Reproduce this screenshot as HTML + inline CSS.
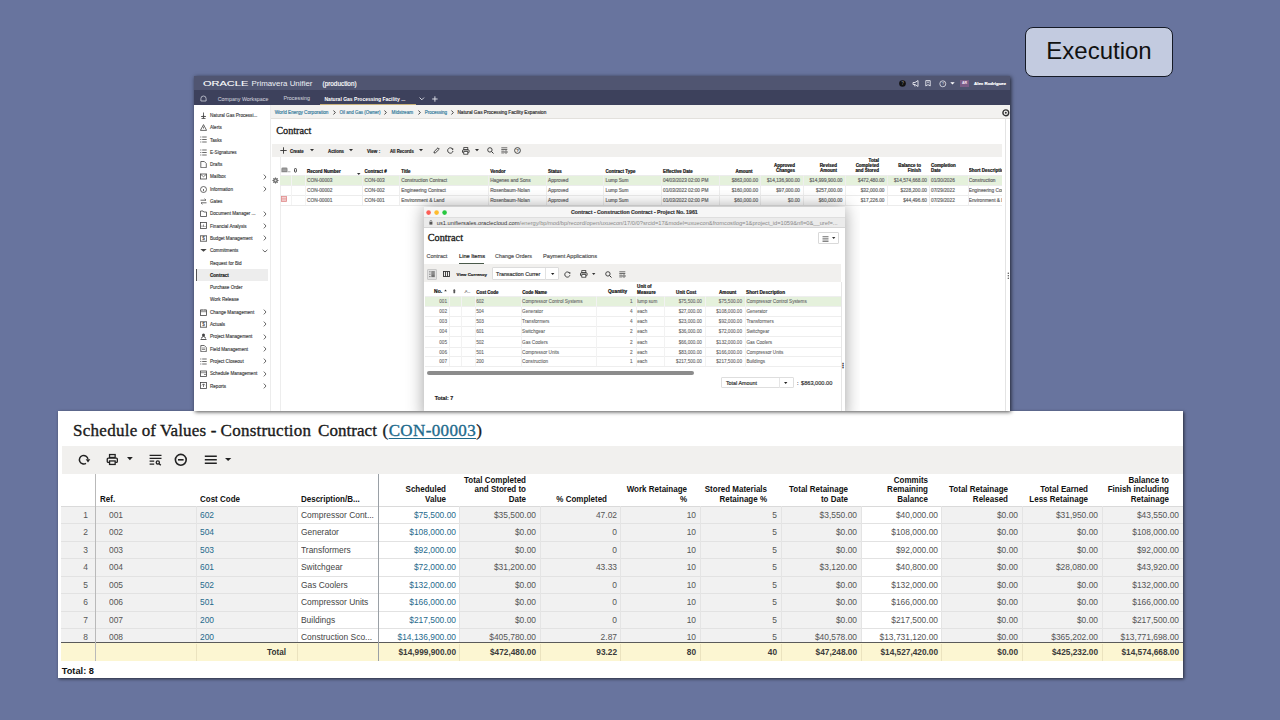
<!DOCTYPE html>
<html><head><meta charset="utf-8"><style>*{box-sizing:border-box;margin:0;padding:0}
html,body{width:1280px;height:720px;overflow:hidden}
body{position:relative;background:#68749e;font-family:'Liberation Sans',sans-serif;color:#333}
.t{position:absolute;white-space:nowrap;line-height:1;transform-origin:0 50%}
.r{position:absolute}
.layer{position:absolute;left:0;top:0;width:1280px;height:720px}
#exec{position:absolute;left:1025px;top:27px;width:148px;height:50px;border:1.5px solid #151a26;border-radius:8px;background:#c3cbe0;font-size:24px;color:#111;text-align:center;line-height:46px}
</style></head><body>
<div id="exec">Execution</div>
<div class="r" style="left:58.00px;top:411.00px;width:1125.00px;height:267.00px;background:#fff;box-shadow:1px 1px 3px rgba(0,0,0,.65);"></div>
<div class="layer" style="clip-path:inset(411px 97px 42px 58px)">
<div class="r" style="left:58.00px;top:411.00px;width:1125.00px;height:267.00px;background:#fff;"></div>
<div class="t" style="left:73.10px;top:422.00px;font-size:17px;color:#1a1a1a;font-family:'Liberation Serif',serif;letter-spacing:0.26px;-webkit-text-stroke:0.35px #1a1a1a">Schedule</div>
<div class="t" style="left:141.70px;top:422.00px;font-size:17px;color:#1a1a1a;font-family:'Liberation Serif',serif;letter-spacing:0px;-webkit-text-stroke:0.35px #1a1a1a">of</div>
<div class="t" style="left:159.90px;top:422.00px;font-size:17px;color:#1a1a1a;font-family:'Liberation Serif',serif;letter-spacing:0.18px;-webkit-text-stroke:0.35px #1a1a1a">Values</div>
<div class="t" style="left:210.80px;top:422.00px;font-size:17px;color:#1a1a1a;font-family:'Liberation Serif',serif;letter-spacing:0px;-webkit-text-stroke:0.35px #1a1a1a">-</div>
<div class="t" style="left:220.60px;top:422.00px;font-size:17px;color:#1a1a1a;font-family:'Liberation Serif',serif;letter-spacing:0.24px;-webkit-text-stroke:0.35px #1a1a1a">Construction</div>
<div class="t" style="left:318.10px;top:422.00px;font-size:17px;color:#1a1a1a;font-family:'Liberation Serif',serif;letter-spacing:0.04px;-webkit-text-stroke:0.35px #1a1a1a">Contract</div>
<div class="t" style="left:382.6px;top:422.00px;font-size:17px;color:#1a1a1a;font-family:'Liberation Serif',serif;letter-spacing:0.38px;-webkit-text-stroke:0.35px #1a1a1a">(<span style="color:#1d6a8c;-webkit-text-stroke:0.35px #1d6a8c;text-decoration:underline;text-decoration-thickness:1px;text-underline-offset:2px">CON-00003</span>)</div>
<div class="r" style="left:61.50px;top:446.00px;width:1121.50px;height:27.50px;background:#f1f0ee;"></div>
<svg class="r" style="left:77.00px;top:453.00px;" width="14" height="14" viewBox="0 0 14 14"><path d="M8.98 10.35A4.3 4.3 0 1 1 10.93 5.95" fill="none" stroke="#222" stroke-width="1.5"/><path d="M8.7 6.3h4.6L11 9.4z" fill="#222"/></svg>
<svg class="r" style="left:105.00px;top:453.00px;" width="15" height="14" viewBox="0 0 15 14"><rect x="4.55" y="1.55" width="5.6" height="2.9" fill="none" stroke="#222" stroke-width="1.3"/><rect x="2.25" y="5.05" width="10.1" height="4.4" rx="1" fill="none" stroke="#222" stroke-width="1.3"/><rect x="4.55" y="7.95" width="5.6" height="3.5" fill="#f1f0ee" stroke="#222" stroke-width="1.3"/></svg>
<svg class="r" style="left:127.00px;top:457.40px;" width="6" height="4" viewBox="0 0 6 4"><path d="M0 0h5.8L2.9 3.2z" fill="#222"/></svg>
<svg class="r" style="left:148.50px;top:453.50px;" width="14" height="12" viewBox="0 0 14 12"><path d="M0.6 1.3h11.9M0.6 4.4h11.9M0.6 7.15h4.6M0.6 10.1h4.6" stroke="#222" stroke-width="1.2"/><circle cx="8.8" cy="8.4" r="1.6" fill="none" stroke="#222" stroke-width="1.3"/><path d="M9.9 9.6l1.9 1.7" stroke="#222" stroke-width="1.4"/></svg>
<svg class="r" style="left:174.00px;top:452.70px;" width="14" height="14" viewBox="0 0 14 14"><circle cx="6.8" cy="6.8" r="5.4" fill="none" stroke="#222" stroke-width="1.6"/><path d="M4 6.8h5.6" stroke="#222" stroke-width="1.6"/></svg>
<svg class="r" style="left:204.00px;top:454.50px;" width="14" height="10" viewBox="0 0 14 10"><path d="M0.8 1.2h12M0.8 4.7h12M0.8 8.3h12" stroke="#222" stroke-width="1.6"/></svg>
<svg class="r" style="left:225.20px;top:457.70px;" width="7" height="4" viewBox="0 0 7 4"><path d="M0 0h6.3L3.15 3z" fill="#222"/></svg>
<div class="r" style="left:61.10px;top:506.00px;width:34.40px;height:136.50px;background:#f1f1f1;"></div>
<div class="r" style="left:95.50px;top:506.00px;width:100.90px;height:136.50px;background:#f1f1f1;"></div>
<div class="r" style="left:196.40px;top:506.00px;width:100.60px;height:136.50px;background:#f1f1f1;"></div>
<div class="r" style="left:297.00px;top:506.00px;width:81.30px;height:136.50px;background:#ffffff;"></div>
<div class="r" style="left:378.30px;top:506.00px;width:81.10px;height:136.50px;background:#ffffff;"></div>
<div class="r" style="left:459.40px;top:506.00px;width:80.30px;height:136.50px;background:#f1f1f1;"></div>
<div class="r" style="left:539.70px;top:506.00px;width:80.60px;height:136.50px;background:#f1f1f1;"></div>
<div class="r" style="left:620.30px;top:506.00px;width:79.70px;height:136.50px;background:#f1f1f1;"></div>
<div class="r" style="left:700.00px;top:506.00px;width:80.60px;height:136.50px;background:#f1f1f1;"></div>
<div class="r" style="left:780.60px;top:506.00px;width:80.40px;height:136.50px;background:#f1f1f1;"></div>
<div class="r" style="left:861.00px;top:506.00px;width:80.25px;height:136.50px;background:#ffffff;"></div>
<div class="r" style="left:941.25px;top:506.00px;width:80.65px;height:136.50px;background:#f1f1f1;"></div>
<div class="r" style="left:1021.90px;top:506.00px;width:79.70px;height:136.50px;background:#f1f1f1;"></div>
<div class="r" style="left:1101.60px;top:506.00px;width:81.20px;height:136.50px;background:#f1f1f1;"></div>
<div class="r" style="left:61.10px;top:506.00px;width:1121.70px;height:1.00px;background:#e2e2e2;"></div>
<div class="r" style="left:61.10px;top:523.00px;width:1121.70px;height:1.00px;background:#e2e2e2;"></div>
<div class="r" style="left:61.10px;top:541.00px;width:1121.70px;height:1.00px;background:#e2e2e2;"></div>
<div class="r" style="left:61.10px;top:558.00px;width:1121.70px;height:1.00px;background:#e2e2e2;"></div>
<div class="r" style="left:61.10px;top:576.00px;width:1121.70px;height:1.00px;background:#e2e2e2;"></div>
<div class="r" style="left:61.10px;top:593.00px;width:1121.70px;height:1.00px;background:#e2e2e2;"></div>
<div class="r" style="left:61.10px;top:611.00px;width:1121.70px;height:1.00px;background:#e2e2e2;"></div>
<div class="r" style="left:61.10px;top:628.00px;width:1121.70px;height:1.00px;background:#e2e2e2;"></div>
<div class="r" style="left:61.10px;top:505.70px;width:1121.70px;height:1.00px;background:#dadada;"></div>
<div class="r" style="left:196.40px;top:506.20px;width:1.00px;height:154.40px;background:#e4e4e4;"></div>
<div class="r" style="left:297.00px;top:506.20px;width:1.00px;height:154.40px;background:#e4e4e4;"></div>
<div class="r" style="left:459.40px;top:506.20px;width:1.00px;height:154.40px;background:#e4e4e4;"></div>
<div class="r" style="left:539.70px;top:506.20px;width:1.00px;height:154.40px;background:#e4e4e4;"></div>
<div class="r" style="left:620.30px;top:506.20px;width:1.00px;height:154.40px;background:#e4e4e4;"></div>
<div class="r" style="left:700.00px;top:506.20px;width:1.00px;height:154.40px;background:#e4e4e4;"></div>
<div class="r" style="left:780.60px;top:506.20px;width:1.00px;height:154.40px;background:#e4e4e4;"></div>
<div class="r" style="left:861.00px;top:506.20px;width:1.00px;height:154.40px;background:#e4e4e4;"></div>
<div class="r" style="left:941.25px;top:506.20px;width:1.00px;height:154.40px;background:#e4e4e4;"></div>
<div class="r" style="left:1021.90px;top:506.20px;width:1.00px;height:154.40px;background:#e4e4e4;"></div>
<div class="r" style="left:1101.60px;top:506.20px;width:1.00px;height:154.40px;background:#e4e4e4;"></div>
<div class="r" style="left:61.10px;top:642.50px;width:1121.70px;height:18.10px;background:#fcf6d2;"></div>
<div class="r" style="left:61.10px;top:642.00px;width:1121.70px;height:1.30px;background:#5a5a5a;"></div>
<div class="r" style="left:196.40px;top:643.50px;width:1.00px;height:17.10px;background:#ebe3bf;"></div>
<div class="r" style="left:297.00px;top:643.50px;width:1.00px;height:17.10px;background:#ebe3bf;"></div>
<div class="r" style="left:459.40px;top:643.50px;width:1.00px;height:17.10px;background:#ebe3bf;"></div>
<div class="r" style="left:539.70px;top:643.50px;width:1.00px;height:17.10px;background:#ebe3bf;"></div>
<div class="r" style="left:620.30px;top:643.50px;width:1.00px;height:17.10px;background:#ebe3bf;"></div>
<div class="r" style="left:700.00px;top:643.50px;width:1.00px;height:17.10px;background:#ebe3bf;"></div>
<div class="r" style="left:780.60px;top:643.50px;width:1.00px;height:17.10px;background:#ebe3bf;"></div>
<div class="r" style="left:861.00px;top:643.50px;width:1.00px;height:17.10px;background:#ebe3bf;"></div>
<div class="r" style="left:941.25px;top:643.50px;width:1.00px;height:17.10px;background:#ebe3bf;"></div>
<div class="r" style="left:1021.90px;top:643.50px;width:1.00px;height:17.10px;background:#ebe3bf;"></div>
<div class="r" style="left:1101.60px;top:643.50px;width:1.00px;height:17.10px;background:#ebe3bf;"></div>
<div class="r" style="left:95.20px;top:473.50px;width:1.00px;height:187.10px;background:#b9b9b9;"></div>
<div class="r" style="left:378.00px;top:473.50px;width:1.00px;height:187.10px;background:#9aa0a6;"></div>
<div class="t" style="left:99.70px;top:494.64px;font-size:9.3px;color:#111;font-weight:700;transform: scaleX(0.86);transform-origin:0 50%;">Ref.</div>
<div class="t" style="left:199.80px;top:494.64px;font-size:9.3px;color:#111;font-weight:700;transform: scaleX(0.86);transform-origin:0 50%;">Cost Code</div>
<div class="t" style="left:300.60px;top:494.64px;font-size:9.3px;color:#111;font-weight:700;transform: scaleX(0.86);transform-origin:0 50%;">Description/B...</div>
<div class="t" style="left:445.90px;top:485.24px;font-size:9.3px;color:#111;font-weight:700;transform:translateX(-100%) scaleX(0.86);transform-origin:100% 50%;">Scheduled</div>
<div class="t" style="left:445.90px;top:494.64px;font-size:9.3px;color:#111;font-weight:700;transform:translateX(-100%) scaleX(0.86);transform-origin:100% 50%;">Value</div>
<div class="t" style="left:526.20px;top:475.84px;font-size:9.3px;color:#111;font-weight:700;transform:translateX(-100%) scaleX(0.86);transform-origin:100% 50%;">Total Completed</div>
<div class="t" style="left:526.20px;top:485.24px;font-size:9.3px;color:#111;font-weight:700;transform:translateX(-100%) scaleX(0.86);transform-origin:100% 50%;">and Stored to</div>
<div class="t" style="left:526.20px;top:494.64px;font-size:9.3px;color:#111;font-weight:700;transform:translateX(-100%) scaleX(0.86);transform-origin:100% 50%;">Date</div>
<div class="t" style="left:606.80px;top:494.64px;font-size:9.3px;color:#111;font-weight:700;transform:translateX(-100%) scaleX(0.86);transform-origin:100% 50%;">% Completed</div>
<div class="t" style="left:686.50px;top:485.24px;font-size:9.3px;color:#111;font-weight:700;transform:translateX(-100%) scaleX(0.86);transform-origin:100% 50%;">Work Retainage</div>
<div class="t" style="left:686.50px;top:494.64px;font-size:9.3px;color:#111;font-weight:700;transform:translateX(-100%) scaleX(0.86);transform-origin:100% 50%;">%</div>
<div class="t" style="left:767.10px;top:485.24px;font-size:9.3px;color:#111;font-weight:700;transform:translateX(-100%) scaleX(0.86);transform-origin:100% 50%;">Stored Materials</div>
<div class="t" style="left:767.10px;top:494.64px;font-size:9.3px;color:#111;font-weight:700;transform:translateX(-100%) scaleX(0.86);transform-origin:100% 50%;">Retainage %</div>
<div class="t" style="left:847.50px;top:485.24px;font-size:9.3px;color:#111;font-weight:700;transform:translateX(-100%) scaleX(0.86);transform-origin:100% 50%;">Total Retainage</div>
<div class="t" style="left:847.50px;top:494.64px;font-size:9.3px;color:#111;font-weight:700;transform:translateX(-100%) scaleX(0.86);transform-origin:100% 50%;">to Date</div>
<div class="t" style="left:927.75px;top:475.84px;font-size:9.3px;color:#111;font-weight:700;transform:translateX(-100%) scaleX(0.86);transform-origin:100% 50%;">Commits</div>
<div class="t" style="left:927.75px;top:485.24px;font-size:9.3px;color:#111;font-weight:700;transform:translateX(-100%) scaleX(0.86);transform-origin:100% 50%;">Remaining</div>
<div class="t" style="left:927.75px;top:494.64px;font-size:9.3px;color:#111;font-weight:700;transform:translateX(-100%) scaleX(0.86);transform-origin:100% 50%;">Balance</div>
<div class="t" style="left:1008.40px;top:485.24px;font-size:9.3px;color:#111;font-weight:700;transform:translateX(-100%) scaleX(0.86);transform-origin:100% 50%;">Total Retainage</div>
<div class="t" style="left:1008.40px;top:494.64px;font-size:9.3px;color:#111;font-weight:700;transform:translateX(-100%) scaleX(0.86);transform-origin:100% 50%;">Released</div>
<div class="t" style="left:1088.10px;top:485.24px;font-size:9.3px;color:#111;font-weight:700;transform:translateX(-100%) scaleX(0.86);transform-origin:100% 50%;">Total Earned</div>
<div class="t" style="left:1088.10px;top:494.64px;font-size:9.3px;color:#111;font-weight:700;transform:translateX(-100%) scaleX(0.86);transform-origin:100% 50%;">Less Retainage</div>
<div class="t" style="left:1169.30px;top:475.84px;font-size:9.3px;color:#111;font-weight:700;transform:translateX(-100%) scaleX(0.86);transform-origin:100% 50%;">Balance to</div>
<div class="t" style="left:1169.30px;top:485.24px;font-size:9.3px;color:#111;font-weight:700;transform:translateX(-100%) scaleX(0.86);transform-origin:100% 50%;">Finish including</div>
<div class="t" style="left:1169.30px;top:494.64px;font-size:9.3px;color:#111;font-weight:700;transform:translateX(-100%) scaleX(0.86);transform-origin:100% 50%;">Retainage</div>
<div class="t" style="left:88.00px;top:511.34px;font-size:9.3px;color:#555;transform:translateX(-100%) scaleX(0.905);transform-origin:100% 50%;">1</div>
<div class="t" style="left:109.25px;top:511.34px;font-size:9.3px;color:#555;transform: scaleX(0.905);transform-origin:0 50%;">001</div>
<div class="t" style="left:199.80px;top:511.34px;font-size:9.3px;color:#1f6a8c;transform: scaleX(0.905);transform-origin:0 50%;">602</div>
<div class="t" style="left:300.60px;top:511.34px;font-size:9.3px;color:#444;transform: scaleX(0.905);transform-origin:0 50%;">Compressor Cont...</div>
<div class="t" style="left:455.80px;top:511.34px;font-size:9.3px;color:#1f6a8c;transform:translateX(-100%) scaleX(0.905);transform-origin:100% 50%;">$75,500.00</div>
<div class="t" style="left:536.10px;top:511.34px;font-size:9.3px;color:#555;transform:translateX(-100%) scaleX(0.905);transform-origin:100% 50%;">$35,500.00</div>
<div class="t" style="left:616.70px;top:511.34px;font-size:9.3px;color:#555;transform:translateX(-100%) scaleX(0.905);transform-origin:100% 50%;">47.02</div>
<div class="t" style="left:696.40px;top:511.34px;font-size:9.3px;color:#555;transform:translateX(-100%) scaleX(0.905);transform-origin:100% 50%;">10</div>
<div class="t" style="left:777.00px;top:511.34px;font-size:9.3px;color:#555;transform:translateX(-100%) scaleX(0.905);transform-origin:100% 50%;">5</div>
<div class="t" style="left:857.40px;top:511.34px;font-size:9.3px;color:#555;transform:translateX(-100%) scaleX(0.905);transform-origin:100% 50%;">$3,550.00</div>
<div class="t" style="left:937.65px;top:511.34px;font-size:9.3px;color:#555;transform:translateX(-100%) scaleX(0.905);transform-origin:100% 50%;">$40,000.00</div>
<div class="t" style="left:1018.30px;top:511.34px;font-size:9.3px;color:#555;transform:translateX(-100%) scaleX(0.905);transform-origin:100% 50%;">$0.00</div>
<div class="t" style="left:1098.00px;top:511.34px;font-size:9.3px;color:#555;transform:translateX(-100%) scaleX(0.905);transform-origin:100% 50%;">$31,950.00</div>
<div class="t" style="left:1179.20px;top:511.34px;font-size:9.3px;color:#555;transform:translateX(-100%) scaleX(0.905);transform-origin:100% 50%;">$43,550.00</div>
<div class="t" style="left:88.00px;top:528.34px;font-size:9.3px;color:#555;transform:translateX(-100%) scaleX(0.905);transform-origin:100% 50%;">2</div>
<div class="t" style="left:109.25px;top:528.34px;font-size:9.3px;color:#555;transform: scaleX(0.905);transform-origin:0 50%;">002</div>
<div class="t" style="left:199.80px;top:528.34px;font-size:9.3px;color:#1f6a8c;transform: scaleX(0.905);transform-origin:0 50%;">504</div>
<div class="t" style="left:300.60px;top:528.34px;font-size:9.3px;color:#444;transform: scaleX(0.905);transform-origin:0 50%;">Generator</div>
<div class="t" style="left:455.80px;top:528.34px;font-size:9.3px;color:#1f6a8c;transform:translateX(-100%) scaleX(0.905);transform-origin:100% 50%;">$108,000.00</div>
<div class="t" style="left:536.10px;top:528.34px;font-size:9.3px;color:#555;transform:translateX(-100%) scaleX(0.905);transform-origin:100% 50%;">$0.00</div>
<div class="t" style="left:616.70px;top:528.34px;font-size:9.3px;color:#555;transform:translateX(-100%) scaleX(0.905);transform-origin:100% 50%;">0</div>
<div class="t" style="left:696.40px;top:528.34px;font-size:9.3px;color:#555;transform:translateX(-100%) scaleX(0.905);transform-origin:100% 50%;">10</div>
<div class="t" style="left:777.00px;top:528.34px;font-size:9.3px;color:#555;transform:translateX(-100%) scaleX(0.905);transform-origin:100% 50%;">5</div>
<div class="t" style="left:857.40px;top:528.34px;font-size:9.3px;color:#555;transform:translateX(-100%) scaleX(0.905);transform-origin:100% 50%;">$0.00</div>
<div class="t" style="left:937.65px;top:528.34px;font-size:9.3px;color:#555;transform:translateX(-100%) scaleX(0.905);transform-origin:100% 50%;">$108,000.00</div>
<div class="t" style="left:1018.30px;top:528.34px;font-size:9.3px;color:#555;transform:translateX(-100%) scaleX(0.905);transform-origin:100% 50%;">$0.00</div>
<div class="t" style="left:1098.00px;top:528.34px;font-size:9.3px;color:#555;transform:translateX(-100%) scaleX(0.905);transform-origin:100% 50%;">$0.00</div>
<div class="t" style="left:1179.20px;top:528.34px;font-size:9.3px;color:#555;transform:translateX(-100%) scaleX(0.905);transform-origin:100% 50%;">$108,000.00</div>
<div class="t" style="left:88.00px;top:546.34px;font-size:9.3px;color:#555;transform:translateX(-100%) scaleX(0.905);transform-origin:100% 50%;">3</div>
<div class="t" style="left:109.25px;top:546.34px;font-size:9.3px;color:#555;transform: scaleX(0.905);transform-origin:0 50%;">003</div>
<div class="t" style="left:199.80px;top:546.34px;font-size:9.3px;color:#1f6a8c;transform: scaleX(0.905);transform-origin:0 50%;">503</div>
<div class="t" style="left:300.60px;top:546.34px;font-size:9.3px;color:#444;transform: scaleX(0.905);transform-origin:0 50%;">Transformers</div>
<div class="t" style="left:455.80px;top:546.34px;font-size:9.3px;color:#1f6a8c;transform:translateX(-100%) scaleX(0.905);transform-origin:100% 50%;">$92,000.00</div>
<div class="t" style="left:536.10px;top:546.34px;font-size:9.3px;color:#555;transform:translateX(-100%) scaleX(0.905);transform-origin:100% 50%;">$0.00</div>
<div class="t" style="left:616.70px;top:546.34px;font-size:9.3px;color:#555;transform:translateX(-100%) scaleX(0.905);transform-origin:100% 50%;">0</div>
<div class="t" style="left:696.40px;top:546.34px;font-size:9.3px;color:#555;transform:translateX(-100%) scaleX(0.905);transform-origin:100% 50%;">10</div>
<div class="t" style="left:777.00px;top:546.34px;font-size:9.3px;color:#555;transform:translateX(-100%) scaleX(0.905);transform-origin:100% 50%;">5</div>
<div class="t" style="left:857.40px;top:546.34px;font-size:9.3px;color:#555;transform:translateX(-100%) scaleX(0.905);transform-origin:100% 50%;">$0.00</div>
<div class="t" style="left:937.65px;top:546.34px;font-size:9.3px;color:#555;transform:translateX(-100%) scaleX(0.905);transform-origin:100% 50%;">$92,000.00</div>
<div class="t" style="left:1018.30px;top:546.34px;font-size:9.3px;color:#555;transform:translateX(-100%) scaleX(0.905);transform-origin:100% 50%;">$0.00</div>
<div class="t" style="left:1098.00px;top:546.34px;font-size:9.3px;color:#555;transform:translateX(-100%) scaleX(0.905);transform-origin:100% 50%;">$0.00</div>
<div class="t" style="left:1179.20px;top:546.34px;font-size:9.3px;color:#555;transform:translateX(-100%) scaleX(0.905);transform-origin:100% 50%;">$92,000.00</div>
<div class="t" style="left:88.00px;top:563.34px;font-size:9.3px;color:#555;transform:translateX(-100%) scaleX(0.905);transform-origin:100% 50%;">4</div>
<div class="t" style="left:109.25px;top:563.34px;font-size:9.3px;color:#555;transform: scaleX(0.905);transform-origin:0 50%;">004</div>
<div class="t" style="left:199.80px;top:563.34px;font-size:9.3px;color:#1f6a8c;transform: scaleX(0.905);transform-origin:0 50%;">601</div>
<div class="t" style="left:300.60px;top:563.34px;font-size:9.3px;color:#444;transform: scaleX(0.905);transform-origin:0 50%;">Switchgear</div>
<div class="t" style="left:455.80px;top:563.34px;font-size:9.3px;color:#1f6a8c;transform:translateX(-100%) scaleX(0.905);transform-origin:100% 50%;">$72,000.00</div>
<div class="t" style="left:536.10px;top:563.34px;font-size:9.3px;color:#555;transform:translateX(-100%) scaleX(0.905);transform-origin:100% 50%;">$31,200.00</div>
<div class="t" style="left:616.70px;top:563.34px;font-size:9.3px;color:#555;transform:translateX(-100%) scaleX(0.905);transform-origin:100% 50%;">43.33</div>
<div class="t" style="left:696.40px;top:563.34px;font-size:9.3px;color:#555;transform:translateX(-100%) scaleX(0.905);transform-origin:100% 50%;">10</div>
<div class="t" style="left:777.00px;top:563.34px;font-size:9.3px;color:#555;transform:translateX(-100%) scaleX(0.905);transform-origin:100% 50%;">5</div>
<div class="t" style="left:857.40px;top:563.34px;font-size:9.3px;color:#555;transform:translateX(-100%) scaleX(0.905);transform-origin:100% 50%;">$3,120.00</div>
<div class="t" style="left:937.65px;top:563.34px;font-size:9.3px;color:#555;transform:translateX(-100%) scaleX(0.905);transform-origin:100% 50%;">$40,800.00</div>
<div class="t" style="left:1018.30px;top:563.34px;font-size:9.3px;color:#555;transform:translateX(-100%) scaleX(0.905);transform-origin:100% 50%;">$0.00</div>
<div class="t" style="left:1098.00px;top:563.34px;font-size:9.3px;color:#555;transform:translateX(-100%) scaleX(0.905);transform-origin:100% 50%;">$28,080.00</div>
<div class="t" style="left:1179.20px;top:563.34px;font-size:9.3px;color:#555;transform:translateX(-100%) scaleX(0.905);transform-origin:100% 50%;">$43,920.00</div>
<div class="t" style="left:88.00px;top:581.34px;font-size:9.3px;color:#555;transform:translateX(-100%) scaleX(0.905);transform-origin:100% 50%;">5</div>
<div class="t" style="left:109.25px;top:581.34px;font-size:9.3px;color:#555;transform: scaleX(0.905);transform-origin:0 50%;">005</div>
<div class="t" style="left:199.80px;top:581.34px;font-size:9.3px;color:#1f6a8c;transform: scaleX(0.905);transform-origin:0 50%;">502</div>
<div class="t" style="left:300.60px;top:581.34px;font-size:9.3px;color:#444;transform: scaleX(0.905);transform-origin:0 50%;">Gas Coolers</div>
<div class="t" style="left:455.80px;top:581.34px;font-size:9.3px;color:#1f6a8c;transform:translateX(-100%) scaleX(0.905);transform-origin:100% 50%;">$132,000.00</div>
<div class="t" style="left:536.10px;top:581.34px;font-size:9.3px;color:#555;transform:translateX(-100%) scaleX(0.905);transform-origin:100% 50%;">$0.00</div>
<div class="t" style="left:616.70px;top:581.34px;font-size:9.3px;color:#555;transform:translateX(-100%) scaleX(0.905);transform-origin:100% 50%;">0</div>
<div class="t" style="left:696.40px;top:581.34px;font-size:9.3px;color:#555;transform:translateX(-100%) scaleX(0.905);transform-origin:100% 50%;">10</div>
<div class="t" style="left:777.00px;top:581.34px;font-size:9.3px;color:#555;transform:translateX(-100%) scaleX(0.905);transform-origin:100% 50%;">5</div>
<div class="t" style="left:857.40px;top:581.34px;font-size:9.3px;color:#555;transform:translateX(-100%) scaleX(0.905);transform-origin:100% 50%;">$0.00</div>
<div class="t" style="left:937.65px;top:581.34px;font-size:9.3px;color:#555;transform:translateX(-100%) scaleX(0.905);transform-origin:100% 50%;">$132,000.00</div>
<div class="t" style="left:1018.30px;top:581.34px;font-size:9.3px;color:#555;transform:translateX(-100%) scaleX(0.905);transform-origin:100% 50%;">$0.00</div>
<div class="t" style="left:1098.00px;top:581.34px;font-size:9.3px;color:#555;transform:translateX(-100%) scaleX(0.905);transform-origin:100% 50%;">$0.00</div>
<div class="t" style="left:1179.20px;top:581.34px;font-size:9.3px;color:#555;transform:translateX(-100%) scaleX(0.905);transform-origin:100% 50%;">$132,000.00</div>
<div class="t" style="left:88.00px;top:598.34px;font-size:9.3px;color:#555;transform:translateX(-100%) scaleX(0.905);transform-origin:100% 50%;">6</div>
<div class="t" style="left:109.25px;top:598.34px;font-size:9.3px;color:#555;transform: scaleX(0.905);transform-origin:0 50%;">006</div>
<div class="t" style="left:199.80px;top:598.34px;font-size:9.3px;color:#1f6a8c;transform: scaleX(0.905);transform-origin:0 50%;">501</div>
<div class="t" style="left:300.60px;top:598.34px;font-size:9.3px;color:#444;transform: scaleX(0.905);transform-origin:0 50%;">Compressor Units</div>
<div class="t" style="left:455.80px;top:598.34px;font-size:9.3px;color:#1f6a8c;transform:translateX(-100%) scaleX(0.905);transform-origin:100% 50%;">$166,000.00</div>
<div class="t" style="left:536.10px;top:598.34px;font-size:9.3px;color:#555;transform:translateX(-100%) scaleX(0.905);transform-origin:100% 50%;">$0.00</div>
<div class="t" style="left:616.70px;top:598.34px;font-size:9.3px;color:#555;transform:translateX(-100%) scaleX(0.905);transform-origin:100% 50%;">0</div>
<div class="t" style="left:696.40px;top:598.34px;font-size:9.3px;color:#555;transform:translateX(-100%) scaleX(0.905);transform-origin:100% 50%;">10</div>
<div class="t" style="left:777.00px;top:598.34px;font-size:9.3px;color:#555;transform:translateX(-100%) scaleX(0.905);transform-origin:100% 50%;">5</div>
<div class="t" style="left:857.40px;top:598.34px;font-size:9.3px;color:#555;transform:translateX(-100%) scaleX(0.905);transform-origin:100% 50%;">$0.00</div>
<div class="t" style="left:937.65px;top:598.34px;font-size:9.3px;color:#555;transform:translateX(-100%) scaleX(0.905);transform-origin:100% 50%;">$166,000.00</div>
<div class="t" style="left:1018.30px;top:598.34px;font-size:9.3px;color:#555;transform:translateX(-100%) scaleX(0.905);transform-origin:100% 50%;">$0.00</div>
<div class="t" style="left:1098.00px;top:598.34px;font-size:9.3px;color:#555;transform:translateX(-100%) scaleX(0.905);transform-origin:100% 50%;">$0.00</div>
<div class="t" style="left:1179.20px;top:598.34px;font-size:9.3px;color:#555;transform:translateX(-100%) scaleX(0.905);transform-origin:100% 50%;">$166,000.00</div>
<div class="t" style="left:88.00px;top:616.34px;font-size:9.3px;color:#555;transform:translateX(-100%) scaleX(0.905);transform-origin:100% 50%;">7</div>
<div class="t" style="left:109.25px;top:616.34px;font-size:9.3px;color:#555;transform: scaleX(0.905);transform-origin:0 50%;">007</div>
<div class="t" style="left:199.80px;top:616.34px;font-size:9.3px;color:#1f6a8c;transform: scaleX(0.905);transform-origin:0 50%;">200</div>
<div class="t" style="left:300.60px;top:616.34px;font-size:9.3px;color:#444;transform: scaleX(0.905);transform-origin:0 50%;">Buildings</div>
<div class="t" style="left:455.80px;top:616.34px;font-size:9.3px;color:#1f6a8c;transform:translateX(-100%) scaleX(0.905);transform-origin:100% 50%;">$217,500.00</div>
<div class="t" style="left:536.10px;top:616.34px;font-size:9.3px;color:#555;transform:translateX(-100%) scaleX(0.905);transform-origin:100% 50%;">$0.00</div>
<div class="t" style="left:616.70px;top:616.34px;font-size:9.3px;color:#555;transform:translateX(-100%) scaleX(0.905);transform-origin:100% 50%;">0</div>
<div class="t" style="left:696.40px;top:616.34px;font-size:9.3px;color:#555;transform:translateX(-100%) scaleX(0.905);transform-origin:100% 50%;">10</div>
<div class="t" style="left:777.00px;top:616.34px;font-size:9.3px;color:#555;transform:translateX(-100%) scaleX(0.905);transform-origin:100% 50%;">5</div>
<div class="t" style="left:857.40px;top:616.34px;font-size:9.3px;color:#555;transform:translateX(-100%) scaleX(0.905);transform-origin:100% 50%;">$0.00</div>
<div class="t" style="left:937.65px;top:616.34px;font-size:9.3px;color:#555;transform:translateX(-100%) scaleX(0.905);transform-origin:100% 50%;">$217,500.00</div>
<div class="t" style="left:1018.30px;top:616.34px;font-size:9.3px;color:#555;transform:translateX(-100%) scaleX(0.905);transform-origin:100% 50%;">$0.00</div>
<div class="t" style="left:1098.00px;top:616.34px;font-size:9.3px;color:#555;transform:translateX(-100%) scaleX(0.905);transform-origin:100% 50%;">$0.00</div>
<div class="t" style="left:1179.20px;top:616.34px;font-size:9.3px;color:#555;transform:translateX(-100%) scaleX(0.905);transform-origin:100% 50%;">$217,500.00</div>
<div class="t" style="left:88.00px;top:633.34px;font-size:9.3px;color:#555;transform:translateX(-100%) scaleX(0.905);transform-origin:100% 50%;">8</div>
<div class="t" style="left:109.25px;top:633.34px;font-size:9.3px;color:#555;transform: scaleX(0.905);transform-origin:0 50%;">008</div>
<div class="t" style="left:199.80px;top:633.34px;font-size:9.3px;color:#1f6a8c;transform: scaleX(0.905);transform-origin:0 50%;">200</div>
<div class="t" style="left:300.60px;top:633.34px;font-size:9.3px;color:#444;transform: scaleX(0.905);transform-origin:0 50%;">Construction Sco...</div>
<div class="t" style="left:455.80px;top:633.34px;font-size:9.3px;color:#1f6a8c;transform:translateX(-100%) scaleX(0.905);transform-origin:100% 50%;">$14,136,900.00</div>
<div class="t" style="left:536.10px;top:633.34px;font-size:9.3px;color:#555;transform:translateX(-100%) scaleX(0.905);transform-origin:100% 50%;">$405,780.00</div>
<div class="t" style="left:616.70px;top:633.34px;font-size:9.3px;color:#555;transform:translateX(-100%) scaleX(0.905);transform-origin:100% 50%;">2.87</div>
<div class="t" style="left:696.40px;top:633.34px;font-size:9.3px;color:#555;transform:translateX(-100%) scaleX(0.905);transform-origin:100% 50%;">10</div>
<div class="t" style="left:777.00px;top:633.34px;font-size:9.3px;color:#555;transform:translateX(-100%) scaleX(0.905);transform-origin:100% 50%;">5</div>
<div class="t" style="left:857.40px;top:633.34px;font-size:9.3px;color:#555;transform:translateX(-100%) scaleX(0.905);transform-origin:100% 50%;">$40,578.00</div>
<div class="t" style="left:937.65px;top:633.34px;font-size:9.3px;color:#555;transform:translateX(-100%) scaleX(0.905);transform-origin:100% 50%;">$13,731,120.00</div>
<div class="t" style="left:1018.30px;top:633.34px;font-size:9.3px;color:#555;transform:translateX(-100%) scaleX(0.905);transform-origin:100% 50%;">$0.00</div>
<div class="t" style="left:1098.00px;top:633.34px;font-size:9.3px;color:#555;transform:translateX(-100%) scaleX(0.905);transform-origin:100% 50%;">$365,202.00</div>
<div class="t" style="left:1179.20px;top:633.34px;font-size:9.3px;color:#555;transform:translateX(-100%) scaleX(0.905);transform-origin:100% 50%;">$13,771,698.00</div>
<div class="t" style="left:286.00px;top:647.94px;font-size:9.1px;color:#333;font-weight:700;transform:translateX(-100%) scaleX(0.9);transform-origin:100% 50%;">Total</div>
<div class="t" style="left:455.80px;top:647.89px;font-size:9.2px;color:#3a3a3a;font-weight:700;transform:translateX(-100%) scaleX(0.9);transform-origin:100% 50%;">$14,999,900.00</div>
<div class="t" style="left:536.10px;top:647.89px;font-size:9.2px;color:#3a3a3a;font-weight:700;transform:translateX(-100%) scaleX(0.9);transform-origin:100% 50%;">$472,480.00</div>
<div class="t" style="left:616.70px;top:647.89px;font-size:9.2px;color:#3a3a3a;font-weight:700;transform:translateX(-100%) scaleX(0.9);transform-origin:100% 50%;">93.22</div>
<div class="t" style="left:696.40px;top:647.89px;font-size:9.2px;color:#3a3a3a;font-weight:700;transform:translateX(-100%) scaleX(0.9);transform-origin:100% 50%;">80</div>
<div class="t" style="left:777.00px;top:647.89px;font-size:9.2px;color:#3a3a3a;font-weight:700;transform:translateX(-100%) scaleX(0.9);transform-origin:100% 50%;">40</div>
<div class="t" style="left:857.40px;top:647.89px;font-size:9.2px;color:#3a3a3a;font-weight:700;transform:translateX(-100%) scaleX(0.9);transform-origin:100% 50%;">$47,248.00</div>
<div class="t" style="left:937.65px;top:647.89px;font-size:9.2px;color:#3a3a3a;font-weight:700;transform:translateX(-100%) scaleX(0.9);transform-origin:100% 50%;">$14,527,420.00</div>
<div class="t" style="left:1018.30px;top:647.89px;font-size:9.2px;color:#3a3a3a;font-weight:700;transform:translateX(-100%) scaleX(0.9);transform-origin:100% 50%;">$0.00</div>
<div class="t" style="left:1098.00px;top:647.89px;font-size:9.2px;color:#3a3a3a;font-weight:700;transform:translateX(-100%) scaleX(0.9);transform-origin:100% 50%;">$425,232.00</div>
<div class="t" style="left:1179.20px;top:647.89px;font-size:9.2px;color:#3a3a3a;font-weight:700;transform:translateX(-100%) scaleX(0.9);transform-origin:100% 50%;">$14,574,668.00</div>
<div class="t" style="left:61.75px;top:666.67px;font-size:9.25px;color:#111;font-weight:700;">Total: 8</div>
</div>
<div class="r" style="left:194.00px;top:76.00px;width:816.00px;height:335.00px;background:#fff;box-shadow:1px 1px 4px rgba(0,0,0,.7);"></div>
<div class="layer" style="clip-path:inset(76px 270px 309px 194px)">
<div class="r" style="left:194.00px;top:76.00px;width:816.00px;height:335.00px;background:#fff;"></div>
<div class="r" style="left:194.00px;top:76.00px;width:816.00px;height:14.00px;background:#505571;"></div>
<div class="t" style="left:202.80px;top:80.28px;font-size:7.6px;color:#fff;transform: scaleX(1.45);-webkit-text-stroke:0.1px #fff;transform-origin:0 50%;transform-origin:0 50%;">ORACLE</div>
<div class="t" style="left:251.50px;top:80.13px;font-size:7.9px;color:#eef0f5;">Primavera Unifier</div>
<div class="t" style="left:322.50px;top:81.06px;font-size:6.4px;color:#fff;-webkit-text-stroke:0.15px #fff;">(production)</div>
<svg class="r" style="left:899.00px;top:80.00px;" width="7" height="7" viewBox="0 0 7 7"><circle cx="3.5" cy="3.5" r="3.3" fill="#111"/><text x="3.5" y="5.3" font-size="4.5" fill="#777" text-anchor="middle" font-family="Liberation Sans" font-weight="700">?</text></svg>
<svg class="r" style="left:912.00px;top:80.00px;" width="8" height="7" viewBox="0 0 8 7"><path d="M1 2.5h2l3-2v6l-3-2H1z" fill="none" stroke="#e6e8ef" stroke-width="0.9"/><path d="M2.5 4.5l.5 2" stroke="#e6e8ef" stroke-width="0.9"/></svg>
<svg class="r" style="left:924.50px;top:79.80px;" width="6" height="7" viewBox="0 0 6 7"><path d="M0.8 0.6h4.4v5.4L3 4.6 0.8 6z" fill="none" stroke="#e6e8ef" stroke-width="0.9"/><path d="M2 2.2h2" stroke="#e6e8ef" stroke-width="0.8"/></svg>
<svg class="r" style="left:939.00px;top:79.50px;" width="8" height="8" viewBox="0 0 8 8"><circle cx="3.8" cy="3.8" r="3" fill="none" stroke="#e6e8ef" stroke-width="0.8"/><text x="3.8" y="5.4" font-size="4.2" fill="#e6e8ef" text-anchor="middle" font-family="Liberation Sans">?</text></svg>
<svg class="r" style="left:950.00px;top:82.00px;" width="5" height="3" viewBox="0 0 5 3"><path d="M0.3 0.3h4.4L2.5 2.6z" fill="#fff"/></svg>
<div class="r" style="left:960.20px;top:79.70px;width:8.70px;height:7.70px;background:#7a5c86;"></div>
<div class="t" style="left:964.55px;top:82.44px;font-size:3.6px;color:#f6e6f4;font-weight:700;transform:translateX(-50%);">AR</div>
<div class="t" style="left:974.00px;top:81.84px;font-size:4.4px;color:#fff;font-weight:700;-webkit-text-stroke:0.18px #fff;">Alex Rodriguez</div>
<div class="r" style="left:194.00px;top:90.00px;width:816.00px;height:15.00px;background:#3d415c;"></div>
<svg class="r" style="left:199.50px;top:95.00px;" width="7" height="7" viewBox="0 0 7 7"><path d="M0.9 6V3.6A2.6 2.6 0 0 1 6.1 3.6V6z" fill="none" stroke="#cfd2dc" stroke-width="0.8"/></svg>
<div class="t" style="left:217.80px;top:96.50px;font-size:5.3px;color:#c9ccd8;-webkit-text-stroke:0.05px #c9ccd8;">Company Workspace</div>
<div class="t" style="left:283.50px;top:96.47px;font-size:5.36px;color:#c9ccd8;-webkit-text-stroke:0.05px #c9ccd8;">Processing</div>
<div class="t" style="left:324.50px;top:96.64px;font-size:5.03px;color:#ffffff;font-weight:700;">Natural Gas Processing Facility ...</div>
<div class="r" style="left:320.00px;top:104.00px;width:95.70px;height:1.00px;background:#c9b27a;"></div>
<svg class="r" style="left:419.00px;top:96.50px;" width="6" height="4" viewBox="0 0 6 4"><path d="M0.6 0.6L2.8 2.8 5 0.6" fill="none" stroke="#e6e8ef" stroke-width="0.9"/></svg>
<svg class="r" style="left:432.00px;top:95.50px;" width="6" height="6" viewBox="0 0 6 6"><path d="M2.9 0.3v5.4M0.2 3h5.4" fill="none" stroke="#e6e8ef" stroke-width="0.9"/></svg>
<div class="r" style="left:271.00px;top:105.00px;width:739.00px;height:13.50px;background:#f3f2f0;"></div>
<div class="r" style="left:271.00px;top:118.00px;width:739.00px;height:1.00px;background:#e3e1dd;"></div>
<div class="t" style="left:274.70px;top:111.31px;font-size:4.67px;color:#3b7fa0;-webkit-text-stroke:0.18px #3b7fa0;">World Energy Corporation</div>
<svg class="r" style="left:332.55px;top:109.80px;" width="3" height="5" viewBox="0 0 3 5"><path d="M0.5 0.5L2.3 2.5 0.5 4.5" fill="none" stroke="#333" stroke-width="0.9"/></svg>
<div class="t" style="left:339.50px;top:111.40px;font-size:4.48px;color:#3b7fa0;-webkit-text-stroke:0.18px #3b7fa0;">Oil and Gas (Owner)</div>
<svg class="r" style="left:384.40px;top:109.80px;" width="3" height="5" viewBox="0 0 3 5"><path d="M0.5 0.5L2.3 2.5 0.5 4.5" fill="none" stroke="#333" stroke-width="0.9"/></svg>
<div class="t" style="left:391.60px;top:111.35px;font-size:4.6px;color:#3b7fa0;-webkit-text-stroke:0.18px #3b7fa0;">Midstream</div>
<svg class="r" style="left:418.00px;top:109.80px;" width="3" height="5" viewBox="0 0 3 5"><path d="M0.5 0.5L2.3 2.5 0.5 4.5" fill="none" stroke="#333" stroke-width="0.9"/></svg>
<div class="t" style="left:424.70px;top:111.39px;font-size:4.5px;color:#3b7fa0;-webkit-text-stroke:0.18px #3b7fa0;">Processing</div>
<svg class="r" style="left:450.80px;top:109.80px;" width="3" height="5" viewBox="0 0 3 5"><path d="M0.5 0.5L2.3 2.5 0.5 4.5" fill="none" stroke="#333" stroke-width="0.9"/></svg>
<div class="t" style="left:457.40px;top:111.29px;font-size:4.72px;color:#333;-webkit-text-stroke:0.18px #333;">Natural Gas Processing Facility Expansion</div>
<svg class="r" style="left:1001.50px;top:108.50px;" width="8" height="8" viewBox="0 0 8 8"><circle cx="3.8" cy="3.8" r="2.9" fill="none" stroke="#333" stroke-width="1.4"/><circle cx="3.8" cy="3.8" r="1" fill="#333"/></svg>
<div class="r" style="left:270.00px;top:105.00px;width:1.00px;height:306.00px;background:#ececec;"></div>
<div class="t" style="left:210.00px;top:113.90px;font-size:4.6px;color:#3d3d3d;-webkit-text-stroke:0.13px #3d3d3d;">Natural Gas Processi...</div>
<svg class="r" style="left:199.50px;top:111.75px;" width="7" height="7" viewBox="0 0 7 7"><path d="M3.5 0.5v4M1 4.5h5M3.5 4.5v2M1.5 6.5h4" stroke="#444" stroke-width="0.8" fill="none"/><circle cx="3.5" cy="4.5" r="1" fill="#444"/></svg>
<div class="t" style="left:210.00px;top:126.20px;font-size:4.6px;color:#3d3d3d;-webkit-text-stroke:0.13px #3d3d3d;">Alerts</div>
<svg class="r" style="left:199.50px;top:124.05px;" width="7" height="7" viewBox="0 0 7 7"><path d="M3.5 0.6L6.6 6.4H0.4z" fill="none" stroke="#444" stroke-width="0.8"/><path d="M3.5 2.6v2" stroke="#444" stroke-width="0.7"/></svg>
<div class="t" style="left:210.00px;top:138.50px;font-size:4.6px;color:#3d3d3d;-webkit-text-stroke:0.13px #3d3d3d;">Tasks</div>
<svg class="r" style="left:199.50px;top:136.35px;" width="7" height="7" viewBox="0 0 7 7"><path d="M2.2 1h4.5M2.2 3.5h4.5M2.2 6h4.5M0.3 1h1M0.3 3.5h1M0.3 6h1" stroke="#444" stroke-width="0.8"/></svg>
<div class="t" style="left:210.00px;top:150.80px;font-size:4.6px;color:#3d3d3d;-webkit-text-stroke:0.13px #3d3d3d;">E-Signatures</div>
<svg class="r" style="left:199.50px;top:148.65px;" width="7" height="7" viewBox="0 0 7 7"><path d="M2.2 1h4.5M2.2 3.5h4.5M2.2 6h4.5M0.3 1h1M0.3 3.5h1M0.3 6h1" stroke="#444" stroke-width="0.8"/></svg>
<div class="t" style="left:210.00px;top:163.10px;font-size:4.6px;color:#3d3d3d;-webkit-text-stroke:0.13px #3d3d3d;">Drafts</div>
<svg class="r" style="left:199.50px;top:160.95px;" width="7" height="7" viewBox="0 0 7 7"><path d="M0.8 0.5h3.5l2 2v4.2H0.8z" fill="none" stroke="#444" stroke-width="0.8"/></svg>
<div class="t" style="left:210.00px;top:175.40px;font-size:4.6px;color:#3d3d3d;-webkit-text-stroke:0.13px #3d3d3d;">Mailbox</div>
<svg class="r" style="left:199.50px;top:173.25px;" width="7" height="7" viewBox="0 0 7 7"><rect x="0.5" y="1" width="6" height="5" fill="none" stroke="#444" stroke-width="0.8"/><path d="M0.5 1.2l3 2.5 3-2.5" fill="none" stroke="#444" stroke-width="0.7"/></svg>
<svg class="r" style="left:262.50px;top:173.75px;" width="4" height="6" viewBox="0 0 4 6"><path d="M0.8 0.6L3 3 0.8 5.4" fill="none" stroke="#444" stroke-width="0.8"/></svg>
<div class="t" style="left:210.00px;top:187.70px;font-size:4.6px;color:#3d3d3d;-webkit-text-stroke:0.13px #3d3d3d;">Information</div>
<svg class="r" style="left:199.50px;top:185.55px;" width="7" height="7" viewBox="0 0 7 7"><circle cx="3.5" cy="3.5" r="3" fill="none" stroke="#444" stroke-width="0.8"/><path d="M3.5 3v2.2" stroke="#444" stroke-width="0.8"/></svg>
<svg class="r" style="left:262.50px;top:186.05px;" width="4" height="6" viewBox="0 0 4 6"><path d="M0.8 0.6L3 3 0.8 5.4" fill="none" stroke="#444" stroke-width="0.8"/></svg>
<div class="t" style="left:210.00px;top:200.00px;font-size:4.6px;color:#3d3d3d;-webkit-text-stroke:0.13px #3d3d3d;">Gates</div>
<svg class="r" style="left:199.50px;top:197.85px;" width="7" height="7" viewBox="0 0 7 7"><path d="M0.5 2.2h5.5M4.5 0.8l1.5 1.4M6.5 4.8H1M2.5 6.2L1 4.8" stroke="#444" stroke-width="0.8" fill="none"/></svg>
<div class="t" style="left:210.00px;top:212.30px;font-size:4.6px;color:#3d3d3d;-webkit-text-stroke:0.13px #3d3d3d;">Document Manager ...</div>
<svg class="r" style="left:199.50px;top:210.15px;" width="7" height="7" viewBox="0 0 7 7"><path d="M0.5 1h2.5l.8 1h2.7v4.5H0.5z" fill="none" stroke="#444" stroke-width="0.8"/></svg>
<svg class="r" style="left:262.50px;top:210.65px;" width="4" height="6" viewBox="0 0 4 6"><path d="M0.8 0.6L3 3 0.8 5.4" fill="none" stroke="#444" stroke-width="0.8"/></svg>
<div class="t" style="left:210.00px;top:224.60px;font-size:4.6px;color:#3d3d3d;-webkit-text-stroke:0.13px #3d3d3d;">Financial Analysis</div>
<svg class="r" style="left:199.50px;top:222.45px;" width="7" height="7" viewBox="0 0 7 7"><rect x="0.5" y="0.5" width="6" height="6" fill="none" stroke="#444" stroke-width="0.8"/><path d="M2 5V3.5M3.5 5V2.5M5 5V4" stroke="#444" stroke-width="0.6"/></svg>
<svg class="r" style="left:262.50px;top:222.95px;" width="4" height="6" viewBox="0 0 4 6"><path d="M0.8 0.6L3 3 0.8 5.4" fill="none" stroke="#444" stroke-width="0.8"/></svg>
<div class="t" style="left:210.00px;top:236.90px;font-size:4.6px;color:#3d3d3d;-webkit-text-stroke:0.13px #3d3d3d;">Budget Management</div>
<svg class="r" style="left:199.50px;top:234.75px;" width="7" height="7" viewBox="0 0 7 7"><rect x="0.3" y="0.8" width="6.4" height="5.4" fill="none" stroke="#444" stroke-width="0.8"/><text x="3.5" y="5.3" font-size="4.6" text-anchor="middle" font-family="Liberation Sans" font-weight="700" fill="#444">$</text></svg>
<svg class="r" style="left:262.50px;top:235.25px;" width="4" height="6" viewBox="0 0 4 6"><path d="M0.8 0.6L3 3 0.8 5.4" fill="none" stroke="#444" stroke-width="0.8"/></svg>
<div class="t" style="left:210.00px;top:249.20px;font-size:4.6px;color:#3d3d3d;-webkit-text-stroke:0.13px #3d3d3d;">Commitments</div>
<svg class="r" style="left:199.50px;top:247.05px;" width="7" height="7" viewBox="0 0 7 7"><path d="M0.3 2h6.4L3.5 4.8z" fill="#444"/></svg>
<svg class="r" style="left:262.00px;top:248.55px;" width="6" height="4" viewBox="0 0 6 4"><path d="M0.6 0.8L3 3 5.4 0.8" fill="none" stroke="#444" stroke-width="0.8"/></svg>
<div class="t" style="left:210.00px;top:261.50px;font-size:4.6px;color:#3d3d3d;-webkit-text-stroke:0.13px #3d3d3d;">Request for Bid</div>
<div class="r" style="left:195.80px;top:268.85px;width:72.60px;height:12.50px;background:#ededed;"></div>
<div class="r" style="left:195.80px;top:268.85px;width:1.00px;height:12.50px;background:#555;"></div>
<div class="t" style="left:210.00px;top:273.80px;font-size:4.6px;color:#222;font-weight:700;-webkit-text-stroke:0.18px #222;">Contract</div>
<div class="t" style="left:210.00px;top:286.10px;font-size:4.6px;color:#3d3d3d;-webkit-text-stroke:0.13px #3d3d3d;">Purchase Order</div>
<div class="t" style="left:210.00px;top:298.40px;font-size:4.6px;color:#3d3d3d;-webkit-text-stroke:0.13px #3d3d3d;">Work Release</div>
<div class="t" style="left:210.00px;top:310.70px;font-size:4.6px;color:#3d3d3d;-webkit-text-stroke:0.13px #3d3d3d;">Change Management</div>
<svg class="r" style="left:199.50px;top:308.55px;" width="7" height="7" viewBox="0 0 7 7"><rect x="0.5" y="1" width="6" height="5.5" fill="none" stroke="#444" stroke-width="0.8"/><path d="M0.5 2.7h6M2 0.3v1.3M5 .3v1.3" stroke="#444" stroke-width="0.6"/></svg>
<svg class="r" style="left:262.50px;top:309.05px;" width="4" height="6" viewBox="0 0 4 6"><path d="M0.8 0.6L3 3 0.8 5.4" fill="none" stroke="#444" stroke-width="0.8"/></svg>
<div class="t" style="left:210.00px;top:323.00px;font-size:4.6px;color:#3d3d3d;-webkit-text-stroke:0.13px #3d3d3d;">Actuals</div>
<svg class="r" style="left:199.50px;top:320.85px;" width="7" height="7" viewBox="0 0 7 7"><rect x="0.3" y="0.8" width="6.4" height="5.4" fill="none" stroke="#444" stroke-width="0.8"/><text x="3.5" y="5.3" font-size="4.6" text-anchor="middle" font-family="Liberation Sans" font-weight="700" fill="#444">$</text></svg>
<svg class="r" style="left:262.50px;top:321.35px;" width="4" height="6" viewBox="0 0 4 6"><path d="M0.8 0.6L3 3 0.8 5.4" fill="none" stroke="#444" stroke-width="0.8"/></svg>
<div class="t" style="left:210.00px;top:335.30px;font-size:4.6px;color:#3d3d3d;-webkit-text-stroke:0.13px #3d3d3d;">Project Management</div>
<svg class="r" style="left:199.50px;top:333.15px;" width="7" height="7" viewBox="0 0 7 7"><circle cx="3.5" cy="2" r="1.5" fill="#444"/><path d="M0.5 6.5h6M1.5 5.5a2 2 0 0 1 4 0" stroke="#444" stroke-width="0.9" fill="none"/></svg>
<svg class="r" style="left:262.50px;top:333.65px;" width="4" height="6" viewBox="0 0 4 6"><path d="M0.8 0.6L3 3 0.8 5.4" fill="none" stroke="#444" stroke-width="0.8"/></svg>
<div class="t" style="left:210.00px;top:347.60px;font-size:4.6px;color:#3d3d3d;-webkit-text-stroke:0.13px #3d3d3d;">Field Management</div>
<svg class="r" style="left:199.50px;top:345.45px;" width="7" height="7" viewBox="0 0 7 7"><path d="M0.8 0.5h3.5l2 2v4.2H0.8z" fill="none" stroke="#444" stroke-width="0.8"/><path d="M2 3h3M2 4.5h3" stroke="#444" stroke-width="0.6"/></svg>
<svg class="r" style="left:262.50px;top:345.95px;" width="4" height="6" viewBox="0 0 4 6"><path d="M0.8 0.6L3 3 0.8 5.4" fill="none" stroke="#444" stroke-width="0.8"/></svg>
<div class="t" style="left:210.00px;top:359.90px;font-size:4.6px;color:#3d3d3d;-webkit-text-stroke:0.13px #3d3d3d;">Project Closeout</div>
<svg class="r" style="left:199.50px;top:357.75px;" width="7" height="7" viewBox="0 0 7 7"><path d="M2.2 1h4.5M2.2 3.5h4.5M2.2 6h4.5M0.3 1h1M0.3 3.5h1M0.3 6h1" stroke="#444" stroke-width="0.8"/></svg>
<svg class="r" style="left:262.50px;top:358.25px;" width="4" height="6" viewBox="0 0 4 6"><path d="M0.8 0.6L3 3 0.8 5.4" fill="none" stroke="#444" stroke-width="0.8"/></svg>
<div class="t" style="left:210.00px;top:372.20px;font-size:4.6px;color:#3d3d3d;-webkit-text-stroke:0.13px #3d3d3d;">Schedule Management</div>
<svg class="r" style="left:199.50px;top:370.05px;" width="7" height="7" viewBox="0 0 7 7"><rect x="0.5" y="1" width="6" height="5.5" fill="none" stroke="#444" stroke-width="0.8"/><path d="M0.5 2.7h6M4 4.5h2.5" stroke="#444" stroke-width="0.6"/></svg>
<svg class="r" style="left:262.50px;top:370.55px;" width="4" height="6" viewBox="0 0 4 6"><path d="M0.8 0.6L3 3 0.8 5.4" fill="none" stroke="#444" stroke-width="0.8"/></svg>
<div class="t" style="left:210.00px;top:384.50px;font-size:4.6px;color:#3d3d3d;-webkit-text-stroke:0.13px #3d3d3d;">Reports</div>
<svg class="r" style="left:199.50px;top:382.35px;" width="7" height="7" viewBox="0 0 7 7"><rect x="0.5" y="0.5" width="6" height="6" fill="none" stroke="#444" stroke-width="0.8"/><path d="M3.5 5V2M2 3.3l1.5-1.5L5 3.3" stroke="#444" stroke-width="0.7" fill="none"/></svg>
<svg class="r" style="left:262.50px;top:382.85px;" width="4" height="6" viewBox="0 0 4 6"><path d="M0.8 0.6L3 3 0.8 5.4" fill="none" stroke="#444" stroke-width="0.8"/></svg>
<div class="r" style="left:279.60px;top:157.00px;width:1.00px;height:254.00px;background:#ededed;"></div>
<div class="t" style="left:276.25px;top:126.24px;font-size:10.2px;color:#1a1a1a;font-family:'Liberation Serif',serif;-webkit-text-stroke:0.3px #1a1a1a;">Contract</div>
<div class="r" style="left:271.50px;top:143.50px;width:730.50px;height:13.50px;background:#f1f0ee;"></div>
<svg class="r" style="left:279.50px;top:147.00px;" width="7" height="7" viewBox="0 0 7 7"><path d="M3.5 0.3v6.4M0.3 3.5h6.4" stroke="#333" stroke-width="0.9"/></svg>
<div class="t" style="left:290.00px;top:148.65px;font-size:5.0px;color:#222;font-weight:700;transform: scaleX(0.875);-webkit-text-stroke:0.18px #222;transform-origin:0 50%;">Create</div>
<svg class="r" style="left:309.50px;top:149.00px;" width="4" height="3" viewBox="0 0 4 3"><path d="M0 0h4L2 2.2z" fill="#333"/></svg>
<div class="t" style="left:327.80px;top:148.65px;font-size:5.0px;color:#222;font-weight:700;transform: scaleX(0.875);-webkit-text-stroke:0.18px #222;transform-origin:0 50%;">Actions</div>
<svg class="r" style="left:349.00px;top:149.00px;" width="4" height="3" viewBox="0 0 4 3"><path d="M0 0h4L2 2.2z" fill="#333"/></svg>
<div class="t" style="left:366.90px;top:148.65px;font-size:5.0px;color:#222;font-weight:700;transform: scaleX(0.92);-webkit-text-stroke:0.18px #222;transform-origin:0 50%;">View :</div>
<div class="t" style="left:390.00px;top:148.65px;font-size:5.0px;color:#222;font-weight:700;transform: scaleX(0.855);-webkit-text-stroke:0.18px #222;transform-origin:0 50%;">All Records</div>
<svg class="r" style="left:419.00px;top:149.00px;" width="4" height="3" viewBox="0 0 4 3"><path d="M0 0h4L2 2.2z" fill="#333"/></svg>
<svg class="r" style="left:433.00px;top:147.00px;" width="7" height="7" viewBox="0 0 7 7"><path d="M1 6l.3-1.6L5 .8l1.3 1.3L2.6 5.7z" fill="none" stroke="#333" stroke-width="0.9"/></svg>
<svg class="r" style="left:446.50px;top:147.00px;" width="7" height="7" viewBox="0 0 7 7"><path d="M5.7 2.2A2.7 2.7 0 1 0 6 4" fill="none" stroke="#333" stroke-width="0.9"/><path d="M4.3 1.6L6.3 1.4 6 3.4z" fill="#333"/></svg>
<svg class="r" style="left:461.50px;top:146.50px;" width="8" height="8" viewBox="0 0 8 8"><rect x="1.8" y="0.6" width="4" height="2.2" fill="none" stroke="#333" stroke-width="0.8"/><rect x="0.5" y="2.8" width="6.6" height="3" rx=".8" fill="none" stroke="#333" stroke-width="0.9"/><rect x="1.8" y="4.6" width="4" height="2.6" fill="#fff" stroke="#333" stroke-width="0.8"/></svg>
<svg class="r" style="left:474.50px;top:149.00px;" width="4" height="3" viewBox="0 0 4 3"><path d="M0 0h4L2 2.2z" fill="#333"/></svg>
<svg class="r" style="left:487.00px;top:146.80px;" width="7" height="7" viewBox="0 0 7 7"><circle cx="2.9" cy="2.9" r="2.2" fill="none" stroke="#333" stroke-width="0.9"/><path d="M4.5 4.5l2 2" stroke="#333" stroke-width="1"/></svg>
<svg class="r" style="left:500.50px;top:147.00px;" width="7" height="7" viewBox="0 0 7 7"><path d="M0.3 0.8h6M0.3 2.5h6M0.3 4.2h3M0.3 5.9h3" stroke="#333" stroke-width="0.7"/><circle cx="5" cy="5" r="1.2" fill="none" stroke="#333" stroke-width="0.7"/></svg>
<svg class="r" style="left:513.80px;top:146.80px;" width="7" height="7" viewBox="0 0 7 7"><circle cx="3.5" cy="3.5" r="2.9" fill="none" stroke="#333" stroke-width="0.9"/><text x="3.5" y="5.2" font-size="4.3" fill="#333" text-anchor="middle" font-family="Liberation Sans" font-weight="700">?</text></svg>
<div class="r" style="left:279.70px;top:175.40px;width:722.30px;height:9.60px;background:#e5f1dc;"></div>
<div class="r" style="left:279.70px;top:175.20px;width:722.30px;height:1.00px;background:#ececec;"></div>
<div class="r" style="left:279.70px;top:185.00px;width:722.30px;height:1.00px;background:#ececec;"></div>
<div class="r" style="left:279.70px;top:195.00px;width:722.30px;height:1.00px;background:#ececec;"></div>
<div class="r" style="left:279.70px;top:205.00px;width:722.30px;height:1.00px;background:#ececec;"></div>
<div class="r" style="left:291.00px;top:175.40px;width:1.00px;height:29.60px;background:#f3f3f3;"></div>
<div class="r" style="left:305.00px;top:175.40px;width:1.00px;height:29.60px;background:#f3f3f3;"></div>
<div class="r" style="left:362.20px;top:175.40px;width:1.00px;height:29.60px;background:#eeeeee;"></div>
<div class="r" style="left:399.40px;top:175.40px;width:1.00px;height:29.60px;background:#eeeeee;"></div>
<div class="r" style="left:488.40px;top:175.40px;width:1.00px;height:29.60px;background:#eeeeee;"></div>
<div class="r" style="left:546.00px;top:175.40px;width:1.00px;height:29.60px;background:#eeeeee;"></div>
<div class="r" style="left:603.30px;top:175.40px;width:1.00px;height:29.60px;background:#eeeeee;"></div>
<div class="r" style="left:660.90px;top:175.40px;width:1.00px;height:29.60px;background:#eeeeee;"></div>
<div class="r" style="left:718.75px;top:175.40px;width:1.00px;height:29.60px;background:#eeeeee;"></div>
<div class="r" style="left:760.25px;top:175.40px;width:1.00px;height:29.60px;background:#eeeeee;"></div>
<div class="r" style="left:802.50px;top:175.40px;width:1.00px;height:29.60px;background:#eeeeee;"></div>
<div class="r" style="left:844.50px;top:175.40px;width:1.00px;height:29.60px;background:#eeeeee;"></div>
<div class="r" style="left:886.50px;top:175.40px;width:1.00px;height:29.60px;background:#eeeeee;"></div>
<div class="r" style="left:929.00px;top:175.40px;width:1.00px;height:29.60px;background:#eeeeee;"></div>
<div class="r" style="left:967.50px;top:175.40px;width:1.00px;height:29.60px;background:#eeeeee;"></div>
<svg class="r" style="left:281.00px;top:166.80px;" width="10" height="6" viewBox="0 0 10 6"><path d="M0.4 5.2V1.8Q0.4 0.4 1.8 0.4H5.2Q6.5 0.4 6.5 1.8V5.2z" fill="#8a8a8a"/><path d="M1.5 2.2h4M1.5 3.5h4" stroke="#bdbdbd" stroke-width="0.5"/><rect x="6.9" y="4.4" width="2.6" height="0.8" fill="#9a9a9a"/></svg>
<svg class="r" style="left:293.80px;top:168.20px;" width="3" height="5" viewBox="0 0 3 5"><rect x="0.5" y="0.4" width="1.9" height="3.8" rx="0.95" fill="none" stroke="#333" stroke-width="0.9"/></svg>
<div class="t" style="left:307.00px;top:169.58px;font-size:4.53px;color:#111;font-weight:700;-webkit-text-stroke:0.18px #111;">Record Number</div>
<svg class="r" style="left:356.50px;top:172.50px;" width="4" height="3" viewBox="0 0 4 3"><path d="M0 0h3.5L1.75 2z" fill="#333"/></svg>
<div class="t" style="left:364.50px;top:169.59px;font-size:4.5px;color:#111;font-weight:700;-webkit-text-stroke:0.18px #111;">Contract #</div>
<div class="t" style="left:401.25px;top:169.59px;font-size:4.5px;color:#111;font-weight:700;-webkit-text-stroke:0.18px #111;">Title</div>
<div class="t" style="left:490.20px;top:169.59px;font-size:4.5px;color:#111;font-weight:700;-webkit-text-stroke:0.18px #111;">Vendor</div>
<div class="t" style="left:548.00px;top:169.59px;font-size:4.5px;color:#111;font-weight:700;-webkit-text-stroke:0.18px #111;">Status</div>
<div class="t" style="left:605.50px;top:169.59px;font-size:4.5px;color:#111;font-weight:700;-webkit-text-stroke:0.18px #111;">Contract Type</div>
<div class="t" style="left:663.00px;top:169.59px;font-size:4.5px;color:#111;font-weight:700;-webkit-text-stroke:0.18px #111;">Effective Date</div>
<div class="t" style="left:752.50px;top:169.59px;font-size:4.5px;color:#111;font-weight:700;transform:translateX(-100%);-webkit-text-stroke:0.18px #111;">Amount</div>
<div class="t" style="left:795.00px;top:163.99px;font-size:4.5px;color:#111;font-weight:700;transform:translateX(-100%);-webkit-text-stroke:0.18px #111;">Approved</div>
<div class="t" style="left:795.00px;top:169.39px;font-size:4.5px;color:#111;font-weight:700;transform:translateX(-100%);-webkit-text-stroke:0.18px #111;">Changes</div>
<div class="t" style="left:836.90px;top:163.99px;font-size:4.5px;color:#111;font-weight:700;transform:translateX(-100%);-webkit-text-stroke:0.18px #111;">Revised</div>
<div class="t" style="left:836.90px;top:169.39px;font-size:4.5px;color:#111;font-weight:700;transform:translateX(-100%);-webkit-text-stroke:0.18px #111;">Amount</div>
<div class="t" style="left:878.90px;top:158.59px;font-size:4.5px;color:#111;font-weight:700;transform:translateX(-100%);-webkit-text-stroke:0.18px #111;">Total</div>
<div class="t" style="left:878.90px;top:163.99px;font-size:4.5px;color:#111;font-weight:700;transform:translateX(-100%);-webkit-text-stroke:0.18px #111;">Completed</div>
<div class="t" style="left:878.90px;top:169.39px;font-size:4.5px;color:#111;font-weight:700;transform:translateX(-100%);-webkit-text-stroke:0.18px #111;">and Stored</div>
<div class="t" style="left:921.00px;top:163.99px;font-size:4.5px;color:#111;font-weight:700;transform:translateX(-100%);-webkit-text-stroke:0.18px #111;">Balance to</div>
<div class="t" style="left:921.00px;top:169.39px;font-size:4.5px;color:#111;font-weight:700;transform:translateX(-100%);-webkit-text-stroke:0.18px #111;">Finish</div>
<div class="t" style="left:931.00px;top:163.99px;font-size:4.5px;color:#111;font-weight:700;-webkit-text-stroke:0.18px #111;">Completion</div>
<div class="t" style="left:931.00px;top:169.39px;font-size:4.5px;color:#111;font-weight:700;-webkit-text-stroke:0.18px #111;">Date</div>
<div class="r" style="left:968.8px;top:160px;width:33px;height:16px;overflow:hidden"><div class="t" style="left:0.00px;top:9.39px;font-size:4.5px;color:#111;font-weight:700;-webkit-text-stroke:0.18px #111;">Short Description</div>
</div><div class="t" style="left:307.00px;top:179.27px;font-size:4.75px;color:#6a6a6a;-webkit-text-stroke:0.18px #6a6a6a;">CON-00003</div>
<div class="t" style="left:364.50px;top:179.27px;font-size:4.75px;color:#6a6a6a;-webkit-text-stroke:0.18px #6a6a6a;">CON-003</div>
<div class="t" style="left:401.25px;top:179.27px;font-size:4.75px;color:#6a6a6a;-webkit-text-stroke:0.18px #6a6a6a;">Construction Contract</div>
<div class="t" style="left:490.20px;top:179.27px;font-size:4.75px;color:#6a6a6a;-webkit-text-stroke:0.18px #6a6a6a;">Hagenes and Sons</div>
<div class="t" style="left:548.00px;top:179.27px;font-size:4.75px;color:#6a6a6a;-webkit-text-stroke:0.18px #6a6a6a;">Approved</div>
<div class="t" style="left:605.50px;top:179.27px;font-size:4.75px;color:#6a6a6a;-webkit-text-stroke:0.18px #6a6a6a;">Lump Sum</div>
<div class="t" style="left:663.00px;top:179.27px;font-size:4.75px;color:#6a6a6a;-webkit-text-stroke:0.18px #6a6a6a;">04/03/2023 02:00 PM</div>
<div class="t" style="left:758.10px;top:179.27px;font-size:4.75px;color:#6a6a6a;transform:translateX(-100%);-webkit-text-stroke:0.18px #6a6a6a;">$863,000.00</div>
<div class="t" style="left:800.00px;top:179.27px;font-size:4.75px;color:#6a6a6a;transform:translateX(-100%);-webkit-text-stroke:0.18px #6a6a6a;">$14,136,900.00</div>
<div class="t" style="left:842.50px;top:179.27px;font-size:4.75px;color:#6a6a6a;transform:translateX(-100%);-webkit-text-stroke:0.18px #6a6a6a;">$14,999,900.00</div>
<div class="t" style="left:884.50px;top:179.27px;font-size:4.75px;color:#6a6a6a;transform:translateX(-100%);-webkit-text-stroke:0.18px #6a6a6a;">$472,480.00</div>
<div class="t" style="left:927.00px;top:179.27px;font-size:4.75px;color:#6a6a6a;transform:translateX(-100%);-webkit-text-stroke:0.18px #6a6a6a;">$14,574,668.00</div>
<div class="t" style="left:931.00px;top:179.27px;font-size:4.75px;color:#6a6a6a;-webkit-text-stroke:0.18px #6a6a6a;">01/30/2026</div>
<div class="r" style="left:968.8px;top:176.50px;width:33px;height:9px;overflow:hidden"><div class="t" style="left:0.00px;top:2.77px;font-size:4.75px;color:#6a6a6a;-webkit-text-stroke:0.18px #6a6a6a;">Construction</div>
</div><div class="t" style="left:307.00px;top:189.27px;font-size:4.75px;color:#6a6a6a;-webkit-text-stroke:0.18px #6a6a6a;">CON-00002</div>
<div class="t" style="left:364.50px;top:189.27px;font-size:4.75px;color:#6a6a6a;-webkit-text-stroke:0.18px #6a6a6a;">CON-002</div>
<div class="t" style="left:401.25px;top:189.27px;font-size:4.75px;color:#6a6a6a;-webkit-text-stroke:0.18px #6a6a6a;">Engineering Contract</div>
<div class="t" style="left:490.20px;top:189.27px;font-size:4.75px;color:#6a6a6a;-webkit-text-stroke:0.18px #6a6a6a;">Rosenbaum-Nolan</div>
<div class="t" style="left:548.00px;top:189.27px;font-size:4.75px;color:#6a6a6a;-webkit-text-stroke:0.18px #6a6a6a;">Approved</div>
<div class="t" style="left:605.50px;top:189.27px;font-size:4.75px;color:#6a6a6a;-webkit-text-stroke:0.18px #6a6a6a;">Lump Sum</div>
<div class="t" style="left:663.00px;top:189.27px;font-size:4.75px;color:#6a6a6a;-webkit-text-stroke:0.18px #6a6a6a;">01/03/2022 02:00 PM</div>
<div class="t" style="left:758.10px;top:189.27px;font-size:4.75px;color:#6a6a6a;transform:translateX(-100%);-webkit-text-stroke:0.18px #6a6a6a;">$160,000.00</div>
<div class="t" style="left:800.00px;top:189.27px;font-size:4.75px;color:#6a6a6a;transform:translateX(-100%);-webkit-text-stroke:0.18px #6a6a6a;">$97,000.00</div>
<div class="t" style="left:842.50px;top:189.27px;font-size:4.75px;color:#6a6a6a;transform:translateX(-100%);-webkit-text-stroke:0.18px #6a6a6a;">$257,000.00</div>
<div class="t" style="left:884.50px;top:189.27px;font-size:4.75px;color:#6a6a6a;transform:translateX(-100%);-webkit-text-stroke:0.18px #6a6a6a;">$32,000.00</div>
<div class="t" style="left:927.00px;top:189.27px;font-size:4.75px;color:#6a6a6a;transform:translateX(-100%);-webkit-text-stroke:0.18px #6a6a6a;">$228,200.00</div>
<div class="t" style="left:931.00px;top:189.27px;font-size:4.75px;color:#6a6a6a;-webkit-text-stroke:0.18px #6a6a6a;">07/29/2022</div>
<div class="r" style="left:968.8px;top:186.50px;width:33px;height:9px;overflow:hidden"><div class="t" style="left:0.00px;top:2.77px;font-size:4.75px;color:#6a6a6a;-webkit-text-stroke:0.18px #6a6a6a;">Engineering Contract</div>
</div><div class="t" style="left:307.00px;top:199.27px;font-size:4.75px;color:#6a6a6a;-webkit-text-stroke:0.18px #6a6a6a;">CON-00001</div>
<div class="t" style="left:364.50px;top:199.27px;font-size:4.75px;color:#6a6a6a;-webkit-text-stroke:0.18px #6a6a6a;">CON-001</div>
<div class="t" style="left:401.25px;top:199.27px;font-size:4.75px;color:#6a6a6a;-webkit-text-stroke:0.18px #6a6a6a;">Environment &amp; Land</div>
<div class="t" style="left:490.20px;top:199.27px;font-size:4.75px;color:#6a6a6a;-webkit-text-stroke:0.18px #6a6a6a;">Rosenbaum-Nolan</div>
<div class="t" style="left:548.00px;top:199.27px;font-size:4.75px;color:#6a6a6a;-webkit-text-stroke:0.18px #6a6a6a;">Approved</div>
<div class="t" style="left:605.50px;top:199.27px;font-size:4.75px;color:#6a6a6a;-webkit-text-stroke:0.18px #6a6a6a;">Lump Sum</div>
<div class="t" style="left:663.00px;top:199.27px;font-size:4.75px;color:#6a6a6a;-webkit-text-stroke:0.18px #6a6a6a;">01/03/2022 02:00 PM</div>
<div class="t" style="left:758.10px;top:199.27px;font-size:4.75px;color:#6a6a6a;transform:translateX(-100%);-webkit-text-stroke:0.18px #6a6a6a;">$60,000.00</div>
<div class="t" style="left:800.00px;top:199.27px;font-size:4.75px;color:#6a6a6a;transform:translateX(-100%);-webkit-text-stroke:0.18px #6a6a6a;">$0.00</div>
<div class="t" style="left:842.50px;top:199.27px;font-size:4.75px;color:#6a6a6a;transform:translateX(-100%);-webkit-text-stroke:0.18px #6a6a6a;">$60,000.00</div>
<div class="t" style="left:884.50px;top:199.27px;font-size:4.75px;color:#6a6a6a;transform:translateX(-100%);-webkit-text-stroke:0.18px #6a6a6a;">$17,226.00</div>
<div class="t" style="left:927.00px;top:199.27px;font-size:4.75px;color:#6a6a6a;transform:translateX(-100%);-webkit-text-stroke:0.18px #6a6a6a;">$44,496.60</div>
<div class="t" style="left:931.00px;top:199.27px;font-size:4.75px;color:#6a6a6a;-webkit-text-stroke:0.18px #6a6a6a;">07/29/2022</div>
<div class="r" style="left:968.8px;top:196.50px;width:33px;height:9px;overflow:hidden"><div class="t" style="left:0.00px;top:2.77px;font-size:4.75px;color:#6a6a6a;-webkit-text-stroke:0.18px #6a6a6a;">Environment &amp; Land</div>
</div><svg class="r" style="left:272.00px;top:177.00px;" width="7" height="7" viewBox="0 0 7 7"><path d="M5.10 3.50L6.55 3.50M4.63 4.63L5.66 5.66M3.50 5.10L3.50 6.55M2.37 4.63L1.34 5.66M1.90 3.50L0.45 3.50M2.37 2.37L1.34 1.34M3.50 1.90L3.50 0.45M4.63 2.37L5.66 1.34" stroke="#6a6a6a" stroke-width="1.15"/><circle cx="3.5" cy="3.5" r="2.2" fill="#6a6a6a"/><circle cx="3.5" cy="3.5" r="1" fill="#e0e0e0"/></svg>
<svg class="r" style="left:281.00px;top:196.00px;" width="6" height="6" viewBox="0 0 6 6"><rect x="0.5" y="0.5" width="5" height="5" fill="#f6dada" stroke="#e08a8a" stroke-width="0.8"/><path d="M0.5 2.3h5M0.5 3.9h5" stroke="#e08a8a" stroke-width="0.6"/></svg>
<div class="r" style="left:1005.30px;top:118.50px;width:1.00px;height:292.50px;background:#e8e8e8;"></div>
<div class="r" style="left:1002.00px;top:118.50px;width:8.00px;height:292.50px;background:#fff;"></div>
<div class="r" style="left:1005.30px;top:118.50px;width:1.00px;height:292.50px;background:#e4e4e4;"></div>
<svg class="r" style="left:1006.80px;top:271.50px;" width="3" height="8" viewBox="0 0 3 8"><circle cx="1.3" cy="1.2" r="0.75" fill="#555"/><circle cx="1.3" cy="3.7" r="0.75" fill="#555"/><circle cx="1.3" cy="6.2" r="0.75" fill="#555"/></svg>
</div>
<div class="layer" style="clip-path:inset(190px 420px 309px 400px)"><div class="r" style="left:424.00px;top:207.00px;width:421.00px;height:213.00px;background:#fff;box-shadow:0 0 16px rgba(0,0,0,.38);"></div>
</div>
<div class="layer" style="clip-path:inset(207px 435px 309px 424px)">
<div class="r" style="left:424.00px;top:207.00px;width:421.00px;height:204.00px;background:#fff;"></div>
<div class="r" style="left:424.00px;top:207.00px;width:421.00px;height:10.40px;background:#f6f6f6;"></div>
<svg class="r" style="left:426.30px;top:209.50px;" width="5.2" height="5.2" viewBox="0 0 5.2 5.2"><circle cx="2.6" cy="2.6" r="2.3" fill="#fd5f57"/></svg>
<svg class="r" style="left:434.10px;top:209.50px;" width="5.2" height="5.2" viewBox="0 0 5.2 5.2"><circle cx="2.6" cy="2.6" r="2.3" fill="#febc2e"/></svg>
<svg class="r" style="left:441.80px;top:209.50px;" width="5.2" height="5.2" viewBox="0 0 5.2 5.2"><circle cx="2.6" cy="2.6" r="2.3" fill="#28c840"/></svg>
<div class="t" style="left:571.00px;top:210.24px;font-size:5.23px;color:#333;font-weight:700;-webkit-text-stroke:0.18px #333;">Contract - Construction Contract - Project No. 1961</div>
<div class="r" style="left:424.00px;top:217.40px;width:421.00px;height:9.90px;background:#ebebeb;"></div>
<div class="r" style="left:424.00px;top:217.20px;width:421.00px;height:1.00px;background:#dedede;"></div>
<div class="r" style="left:424.00px;top:227.00px;width:421.00px;height:1.00px;background:#d6d6d6;"></div>
<svg class="r" style="left:428.60px;top:219.80px;" width="4" height="5" viewBox="0 0 4 5"><rect x="0.4" y="2" width="3" height="2.6" fill="#555"/><path d="M1 2V1.3a.9.9 0 0 1 1.8 0V2" fill="none" stroke="#555" stroke-width="0.6"/></svg>
<div class="t" style="left:436.8px;top:220.90px;font-size:5.71px;color:#333">us1.unifiersales.oraclecloud.com<span style="color:#8a8a8a">/energy/bp/mod/bp/record/open/uxuecon/17/0/0?srcid=17&amp;model=uxuecon&amp;fromcostlog=1&amp;project_id=1059&amp;nfl=0&amp;__uref=...</span></div>
<div class="t" style="left:427.70px;top:233.21px;font-size:10.25px;color:#1a1a1a;font-family:'Liberation Serif',serif;-webkit-text-stroke:0.3px #1a1a1a;">Contract</div>
<div class="r" style="left:818.20px;top:232.40px;width:20.50px;height:12.00px;background:#fff;border:0.8px solid #d9d9d9;border-radius:1px;"></div>
<svg class="r" style="left:822.00px;top:235.50px;" width="8" height="6" viewBox="0 0 8 6"><path d="M0.5 .6h6M0.5 2.3h6M0.5 4h6M0.5 5.5h6" stroke="#777" stroke-width="0.9"/></svg>
<svg class="r" style="left:832.20px;top:237.20px;" width="4" height="3" viewBox="0 0 4 3"><path d="M0 0h3.4L1.7 2z" fill="#333"/></svg>
<div class="t" style="left:426.50px;top:253.50px;font-size:5.5px;color:#555;-webkit-text-stroke:0.18px #555;">Contract</div>
<div class="t" style="left:458.70px;top:253.50px;font-size:5.5px;color:#222;transform: scaleX(1.025);-webkit-text-stroke:0.18px #222;transform-origin:0 50%;">Line Items</div>
<div class="r" style="left:458.70px;top:263.30px;width:25.40px;height:1.00px;background:#4a5a4a;"></div>
<div class="t" style="left:495.10px;top:253.55px;font-size:5.4px;color:#555;-webkit-text-stroke:0.18px #555;">Change Orders</div>
<div class="t" style="left:542.90px;top:253.50px;font-size:5.5px;color:#555;transform: scaleX(1.027);-webkit-text-stroke:0.18px #555;transform-origin:0 50%;">Payment Applications</div>
<div class="r" style="left:424.00px;top:264.30px;width:416.70px;height:17.90px;background:#f1f0ee;"></div>
<div class="r" style="left:426.90px;top:268.50px;width:9.80px;height:11.10px;background:#e2e2e2;border:0.7px solid #c9c9c9;border-radius:1px;"></div>
<svg class="r" style="left:428.80px;top:270.50px;" width="6" height="7" viewBox="0 0 6 7"><path d="M0.3 .8h1.2M0.3 3.2h1.2M0.3 5.6h1.2M2.3 .8h3.5M2.3 2h3.5M2.3 3.2h3.5M2.3 4.4h3.5M2.3 5.6h3.5" stroke="#333" stroke-width="0.7"/></svg>
<svg class="r" style="left:443.30px;top:270.80px;" width="7" height="6" viewBox="0 0 7 6"><rect x="0.5" y="0.5" width="6" height="5" fill="none" stroke="#333" stroke-width="0.9"/><path d="M2.5 0.5v5M4.5 .5v5" stroke="#333" stroke-width="0.9"/></svg>
<div class="t" style="left:456.60px;top:272.75px;font-size:4.39px;color:#222;font-weight:700;-webkit-text-stroke:0.18px #222;">View Currency</div>
<div class="r" style="left:491.70px;top:266.70px;width:67.50px;height:13.80px;background:#fff;border:0.7px solid #dcdcdc;border-radius:1px;"></div>
<div class="t" style="left:496.10px;top:272.18px;font-size:5.34px;color:#333;-webkit-text-stroke:0.18px #333;">Transaction Currer</div>
<div class="r" style="left:545.00px;top:267.50px;width:1.00px;height:12.20px;background:#e2e2e2;"></div>
<svg class="r" style="left:550.70px;top:273.00px;" width="4" height="3" viewBox="0 0 4 3"><path d="M0 0h3.4L1.7 2z" fill="#222"/></svg>
<svg class="r" style="left:564.30px;top:270.50px;" width="7" height="7" viewBox="0 0 7 7"><path d="M5.6 2.2A2.6 2.6 0 1 0 5.9 4.2" fill="none" stroke="#333" stroke-width="0.9"/><path d="M4.4 1.4L6.4 1.3 6.1 3.3z" fill="#333"/></svg>
<svg class="r" style="left:580.30px;top:270.30px;" width="8" height="8" viewBox="0 0 8 8"><rect x="1.8" y="0.6" width="4" height="2.2" fill="none" stroke="#333" stroke-width="0.8"/><rect x="0.5" y="2.8" width="6.6" height="3" rx=".8" fill="none" stroke="#333" stroke-width="0.9"/><rect x="1.8" y="4.6" width="4" height="2.6" fill="#fff" stroke="#333" stroke-width="0.8"/></svg>
<svg class="r" style="left:592.30px;top:273.00px;" width="4" height="3" viewBox="0 0 4 3"><path d="M0 0h3.4L1.7 2z" fill="#333"/></svg>
<svg class="r" style="left:605.00px;top:271.00px;" width="7" height="7" viewBox="0 0 7 7"><circle cx="2.9" cy="2.9" r="2.2" fill="none" stroke="#333" stroke-width="0.9"/><path d="M4.5 4.5l2 2" stroke="#333" stroke-width="1"/></svg>
<svg class="r" style="left:618.50px;top:270.80px;" width="7" height="7" viewBox="0 0 7 7"><path d="M0.3 0.8h6M0.3 2.5h6M0.3 4.2h3M0.3 5.9h3" stroke="#333" stroke-width="0.7"/><circle cx="5" cy="5" r="1.2" fill="none" stroke="#333" stroke-width="0.7"/></svg>
<div class="t" style="left:434.10px;top:290.36px;font-size:4.97px;color:#111;font-weight:700;-webkit-text-stroke:0.18px #111;">No.</div>
<svg class="r" style="left:443.50px;top:288.80px;" width="3" height="3" viewBox="0 0 3 3"><path d="M0.2 2.2L1.5 .5 2.8 2.2z" fill="#333"/></svg>
<svg class="r" style="left:453.20px;top:289.00px;" width="3" height="5" viewBox="0 0 3 5"><rect x="0.4" y="0.3" width="1.8" height="4" rx=".9" fill="#555"/></svg>
<div class="t" style="left:463.80px;top:291.04px;font-size:3.6px;color:#999;font-weight:700;-webkit-text-stroke:0.18px #999;">↗…</div>
<div class="t" style="left:476.20px;top:290.60px;font-size:4.48px;color:#111;font-weight:700;-webkit-text-stroke:0.18px #111;">Cost Code</div>
<div class="t" style="left:522.30px;top:290.60px;font-size:4.5px;color:#111;font-weight:700;-webkit-text-stroke:0.18px #111;">Code Name</div>
<div class="t" style="left:627.10px;top:290.48px;font-size:4.73px;color:#111;font-weight:700;transform:translateX(-100%);-webkit-text-stroke:0.18px #111;">Quantity</div>
<div class="t" style="left:637.10px;top:285.15px;font-size:4.6px;color:#111;font-weight:700;-webkit-text-stroke:0.18px #111;">Unit of</div>
<div class="t" style="left:637.10px;top:290.55px;font-size:4.6px;color:#111;font-weight:700;-webkit-text-stroke:0.18px #111;">Measure</div>
<div class="t" style="left:676.10px;top:290.56px;font-size:4.57px;color:#111;font-weight:700;-webkit-text-stroke:0.18px #111;">Unit Cost</div>
<div class="t" style="left:736.40px;top:290.55px;font-size:4.6px;color:#111;font-weight:700;transform:translateX(-100%);-webkit-text-stroke:0.18px #111;">Amount</div>
<div class="t" style="left:746.10px;top:290.52px;font-size:4.65px;color:#111;font-weight:700;-webkit-text-stroke:0.18px #111;">Short Description</div>
<div class="r" style="left:424.50px;top:296.20px;width:416.00px;height:10.20px;background:#e5f1dc;"></div>
<div class="r" style="left:424.50px;top:296.20px;width:416.00px;height:1.00px;background:#eeeeee;"></div>
<div class="r" style="left:424.50px;top:306.40px;width:416.00px;height:1.00px;background:#eeeeee;"></div>
<div class="r" style="left:424.50px;top:316.30px;width:416.00px;height:1.00px;background:#eeeeee;"></div>
<div class="r" style="left:424.50px;top:326.40px;width:416.00px;height:1.00px;background:#eeeeee;"></div>
<div class="r" style="left:424.50px;top:336.40px;width:416.00px;height:1.00px;background:#eeeeee;"></div>
<div class="r" style="left:424.50px;top:346.60px;width:416.00px;height:1.00px;background:#eeeeee;"></div>
<div class="r" style="left:424.50px;top:356.40px;width:416.00px;height:1.00px;background:#eeeeee;"></div>
<div class="r" style="left:424.50px;top:366.30px;width:416.00px;height:1.00px;background:#eeeeee;"></div>
<div class="r" style="left:449.40px;top:296.20px;width:1.00px;height:70.10px;background:#f2f2f2;"></div>
<div class="r" style="left:460.90px;top:296.20px;width:1.00px;height:70.10px;background:#f2f2f2;"></div>
<div class="r" style="left:474.50px;top:296.20px;width:1.00px;height:70.10px;background:#f2f2f2;"></div>
<div class="r" style="left:520.80px;top:296.20px;width:1.00px;height:70.10px;background:#f2f2f2;"></div>
<div class="r" style="left:596.30px;top:296.20px;width:1.00px;height:70.10px;background:#f2f2f2;"></div>
<div class="r" style="left:635.50px;top:296.20px;width:1.00px;height:70.10px;background:#f2f2f2;"></div>
<div class="r" style="left:664.40px;top:296.20px;width:1.00px;height:70.10px;background:#f2f2f2;"></div>
<div class="r" style="left:704.80px;top:296.20px;width:1.00px;height:70.10px;background:#f2f2f2;"></div>
<div class="r" style="left:744.80px;top:296.20px;width:1.00px;height:70.10px;background:#f2f2f2;"></div>
<div class="t" style="left:447.00px;top:300.33px;font-size:4.63px;color:#6a6a6a;transform:translateX(-100%);-webkit-text-stroke:0.1px #6a6a6a;">001</div>
<div class="t" style="left:476.20px;top:300.33px;font-size:4.63px;color:#6a6a6a;-webkit-text-stroke:0.1px #6a6a6a;">602</div>
<div class="t" style="left:522.10px;top:300.33px;font-size:4.63px;color:#6a6a6a;-webkit-text-stroke:0.1px #6a6a6a;">Compressor Control Systems</div>
<div class="t" style="left:632.70px;top:300.33px;font-size:4.63px;color:#6a6a6a;transform:translateX(-100%);-webkit-text-stroke:0.1px #6a6a6a;">1</div>
<div class="t" style="left:637.20px;top:300.33px;font-size:4.63px;color:#6a6a6a;-webkit-text-stroke:0.1px #6a6a6a;">lump sum</div>
<div class="t" style="left:701.80px;top:300.33px;font-size:4.63px;color:#6a6a6a;transform:translateX(-100%);-webkit-text-stroke:0.1px #6a6a6a;">$75,500.00</div>
<div class="t" style="left:742.00px;top:300.33px;font-size:4.63px;color:#6a6a6a;transform:translateX(-100%);-webkit-text-stroke:0.1px #6a6a6a;">$75,500.00</div>
<div class="t" style="left:746.40px;top:300.33px;font-size:4.63px;color:#6a6a6a;-webkit-text-stroke:0.1px #6a6a6a;">Compressor Control Systems</div>
<div class="t" style="left:447.00px;top:310.38px;font-size:4.63px;color:#6a6a6a;transform:translateX(-100%);-webkit-text-stroke:0.1px #6a6a6a;">002</div>
<div class="t" style="left:476.20px;top:310.38px;font-size:4.63px;color:#6a6a6a;-webkit-text-stroke:0.1px #6a6a6a;">504</div>
<div class="t" style="left:522.10px;top:310.38px;font-size:4.63px;color:#6a6a6a;-webkit-text-stroke:0.1px #6a6a6a;">Generator</div>
<div class="t" style="left:632.70px;top:310.38px;font-size:4.63px;color:#6a6a6a;transform:translateX(-100%);-webkit-text-stroke:0.1px #6a6a6a;">4</div>
<div class="t" style="left:637.20px;top:310.38px;font-size:4.63px;color:#6a6a6a;-webkit-text-stroke:0.1px #6a6a6a;">each</div>
<div class="t" style="left:701.80px;top:310.38px;font-size:4.63px;color:#6a6a6a;transform:translateX(-100%);-webkit-text-stroke:0.1px #6a6a6a;">$27,000.00</div>
<div class="t" style="left:742.00px;top:310.38px;font-size:4.63px;color:#6a6a6a;transform:translateX(-100%);-webkit-text-stroke:0.1px #6a6a6a;">$108,000.00</div>
<div class="t" style="left:746.40px;top:310.38px;font-size:4.63px;color:#6a6a6a;-webkit-text-stroke:0.1px #6a6a6a;">Generator</div>
<div class="t" style="left:447.00px;top:320.38px;font-size:4.63px;color:#6a6a6a;transform:translateX(-100%);-webkit-text-stroke:0.1px #6a6a6a;">003</div>
<div class="t" style="left:476.20px;top:320.38px;font-size:4.63px;color:#6a6a6a;-webkit-text-stroke:0.1px #6a6a6a;">503</div>
<div class="t" style="left:522.10px;top:320.38px;font-size:4.63px;color:#6a6a6a;-webkit-text-stroke:0.1px #6a6a6a;">Transformers</div>
<div class="t" style="left:632.70px;top:320.38px;font-size:4.63px;color:#6a6a6a;transform:translateX(-100%);-webkit-text-stroke:0.1px #6a6a6a;">4</div>
<div class="t" style="left:637.20px;top:320.38px;font-size:4.63px;color:#6a6a6a;-webkit-text-stroke:0.1px #6a6a6a;">each</div>
<div class="t" style="left:701.80px;top:320.38px;font-size:4.63px;color:#6a6a6a;transform:translateX(-100%);-webkit-text-stroke:0.1px #6a6a6a;">$23,000.00</div>
<div class="t" style="left:742.00px;top:320.38px;font-size:4.63px;color:#6a6a6a;transform:translateX(-100%);-webkit-text-stroke:0.1px #6a6a6a;">$92,000.00</div>
<div class="t" style="left:746.40px;top:320.38px;font-size:4.63px;color:#6a6a6a;-webkit-text-stroke:0.1px #6a6a6a;">Transformers</div>
<div class="t" style="left:447.00px;top:330.43px;font-size:4.63px;color:#6a6a6a;transform:translateX(-100%);-webkit-text-stroke:0.1px #6a6a6a;">004</div>
<div class="t" style="left:476.20px;top:330.43px;font-size:4.63px;color:#6a6a6a;-webkit-text-stroke:0.1px #6a6a6a;">601</div>
<div class="t" style="left:522.10px;top:330.43px;font-size:4.63px;color:#6a6a6a;-webkit-text-stroke:0.1px #6a6a6a;">Switchgear</div>
<div class="t" style="left:632.70px;top:330.43px;font-size:4.63px;color:#6a6a6a;transform:translateX(-100%);-webkit-text-stroke:0.1px #6a6a6a;">2</div>
<div class="t" style="left:637.20px;top:330.43px;font-size:4.63px;color:#6a6a6a;-webkit-text-stroke:0.1px #6a6a6a;">each</div>
<div class="t" style="left:701.80px;top:330.43px;font-size:4.63px;color:#6a6a6a;transform:translateX(-100%);-webkit-text-stroke:0.1px #6a6a6a;">$36,000.00</div>
<div class="t" style="left:742.00px;top:330.43px;font-size:4.63px;color:#6a6a6a;transform:translateX(-100%);-webkit-text-stroke:0.1px #6a6a6a;">$72,000.00</div>
<div class="t" style="left:746.40px;top:330.43px;font-size:4.63px;color:#6a6a6a;-webkit-text-stroke:0.1px #6a6a6a;">Switchgear</div>
<div class="t" style="left:447.00px;top:340.53px;font-size:4.63px;color:#6a6a6a;transform:translateX(-100%);-webkit-text-stroke:0.1px #6a6a6a;">005</div>
<div class="t" style="left:476.20px;top:340.53px;font-size:4.63px;color:#6a6a6a;-webkit-text-stroke:0.1px #6a6a6a;">502</div>
<div class="t" style="left:522.10px;top:340.53px;font-size:4.63px;color:#6a6a6a;-webkit-text-stroke:0.1px #6a6a6a;">Gas Coolers</div>
<div class="t" style="left:632.70px;top:340.53px;font-size:4.63px;color:#6a6a6a;transform:translateX(-100%);-webkit-text-stroke:0.1px #6a6a6a;">2</div>
<div class="t" style="left:637.20px;top:340.53px;font-size:4.63px;color:#6a6a6a;-webkit-text-stroke:0.1px #6a6a6a;">each</div>
<div class="t" style="left:701.80px;top:340.53px;font-size:4.63px;color:#6a6a6a;transform:translateX(-100%);-webkit-text-stroke:0.1px #6a6a6a;">$66,000.00</div>
<div class="t" style="left:742.00px;top:340.53px;font-size:4.63px;color:#6a6a6a;transform:translateX(-100%);-webkit-text-stroke:0.1px #6a6a6a;">$132,000.00</div>
<div class="t" style="left:746.40px;top:340.53px;font-size:4.63px;color:#6a6a6a;-webkit-text-stroke:0.1px #6a6a6a;">Gas Coolers</div>
<div class="t" style="left:447.00px;top:350.53px;font-size:4.63px;color:#6a6a6a;transform:translateX(-100%);-webkit-text-stroke:0.1px #6a6a6a;">006</div>
<div class="t" style="left:476.20px;top:350.53px;font-size:4.63px;color:#6a6a6a;-webkit-text-stroke:0.1px #6a6a6a;">501</div>
<div class="t" style="left:522.10px;top:350.53px;font-size:4.63px;color:#6a6a6a;-webkit-text-stroke:0.1px #6a6a6a;">Compressor Units</div>
<div class="t" style="left:632.70px;top:350.53px;font-size:4.63px;color:#6a6a6a;transform:translateX(-100%);-webkit-text-stroke:0.1px #6a6a6a;">2</div>
<div class="t" style="left:637.20px;top:350.53px;font-size:4.63px;color:#6a6a6a;-webkit-text-stroke:0.1px #6a6a6a;">each</div>
<div class="t" style="left:701.80px;top:350.53px;font-size:4.63px;color:#6a6a6a;transform:translateX(-100%);-webkit-text-stroke:0.1px #6a6a6a;">$83,000.00</div>
<div class="t" style="left:742.00px;top:350.53px;font-size:4.63px;color:#6a6a6a;transform:translateX(-100%);-webkit-text-stroke:0.1px #6a6a6a;">$166,000.00</div>
<div class="t" style="left:746.40px;top:350.53px;font-size:4.63px;color:#6a6a6a;-webkit-text-stroke:0.1px #6a6a6a;">Compressor Units</div>
<div class="t" style="left:447.00px;top:360.38px;font-size:4.63px;color:#6a6a6a;transform:translateX(-100%);-webkit-text-stroke:0.1px #6a6a6a;">007</div>
<div class="t" style="left:476.20px;top:360.38px;font-size:4.63px;color:#6a6a6a;-webkit-text-stroke:0.1px #6a6a6a;">200</div>
<div class="t" style="left:522.10px;top:360.38px;font-size:4.63px;color:#6a6a6a;-webkit-text-stroke:0.1px #6a6a6a;">Construction</div>
<div class="t" style="left:632.70px;top:360.38px;font-size:4.63px;color:#6a6a6a;transform:translateX(-100%);-webkit-text-stroke:0.1px #6a6a6a;">1</div>
<div class="t" style="left:637.20px;top:360.38px;font-size:4.63px;color:#6a6a6a;-webkit-text-stroke:0.1px #6a6a6a;">each</div>
<div class="t" style="left:701.80px;top:360.38px;font-size:4.63px;color:#6a6a6a;transform:translateX(-100%);-webkit-text-stroke:0.1px #6a6a6a;">$217,500.00</div>
<div class="t" style="left:742.00px;top:360.38px;font-size:4.63px;color:#6a6a6a;transform:translateX(-100%);-webkit-text-stroke:0.1px #6a6a6a;">$217,500.00</div>
<div class="t" style="left:746.40px;top:360.38px;font-size:4.63px;color:#6a6a6a;-webkit-text-stroke:0.1px #6a6a6a;">Buildings</div>
<div class="r" style="left:427.30px;top:371.20px;width:267.20px;height:3.60px;background:#8c8c8c;border-radius:2px;"></div>
<div class="r" style="left:840.50px;top:282.20px;width:1.00px;height:128.80px;background:#e6e6e6;"></div>
<div class="t" style="left:843.10px;top:362.46px;font-size:6px;color:#444;font-weight:700;transform:translateX(-50%);-webkit-text-stroke:0.18px #444;">⋮</div>
<div class="r" style="left:721.10px;top:377.20px;width:72.50px;height:11.20px;background:#fff;border:0.7px solid #dedede;border-radius:1px;"></div>
<div class="t" style="left:725.90px;top:380.87px;font-size:5.36px;color:#333;-webkit-text-stroke:0.18px #333;">Total Amount</div>
<div class="r" style="left:778.70px;top:378.00px;width:1.00px;height:9.60px;background:#e6e6e6;"></div>
<svg class="r" style="left:784.30px;top:381.50px;" width="4" height="3" viewBox="0 0 4 3"><path d="M0 0h3.4L1.7 2z" fill="#222"/></svg>
<div class="t" style="left:797.00px;top:380.85px;font-size:5.4px;color:#333;-webkit-text-stroke:0.18px #333;">:</div>
<div class="t" style="left:801.00px;top:380.74px;font-size:5.63px;color:#333;-webkit-text-stroke:0.18px #333;">$863,000.00</div>
<div class="t" style="left:434.70px;top:395.80px;font-size:5.31px;color:#222;font-weight:700;-webkit-text-stroke:0.18px #222;">Total: 7</div>
</div>
</body></html>
